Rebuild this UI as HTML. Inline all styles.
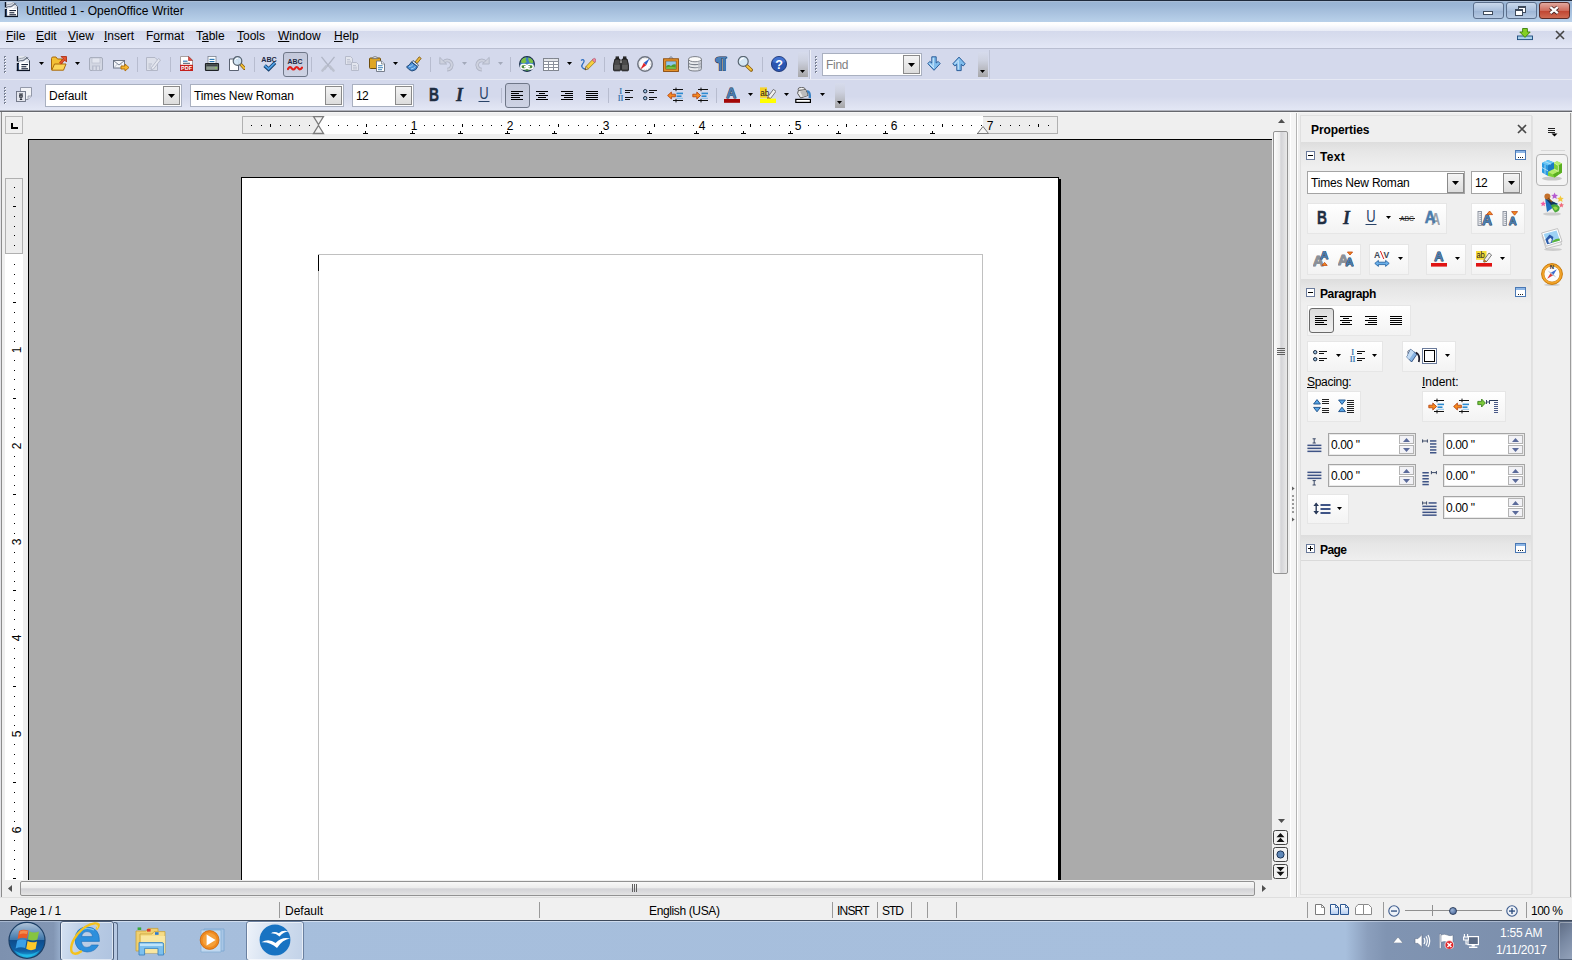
<!DOCTYPE html>
<html><head><meta charset="utf-8"><title>Untitled 1 - OpenOffice Writer</title>
<style>
html,body{margin:0;padding:0}
body{width:1572px;height:960px;overflow:hidden;position:relative;background:#d4d9ec;font:12px "Liberation Sans",sans-serif;color:#000}
div,span.t,svg.i{position:absolute;box-sizing:border-box}
span.t{white-space:nowrap;line-height:14px}
u{text-decoration:underline}
.combo{background:#fff;border:1px solid #a9b0c0;}
.cbtn{background:linear-gradient(#f4f4f4,#dcdcdc);border:1px solid #8a8a8a;}
.grp{background:linear-gradient(#ffffff,#f3f3f3);border:1px solid #e6e6e6}
.spin{background:#fff;border:1px solid #a5a5a5}
</style></head>
<body>
<div style="left:0px;top:0px;width:1572px;height:22px;background:linear-gradient(#98b4d4 0%,#9bb6d6 25%,#a8c1de 55%,#b9d1ea 100%)"></div>
<div style="left:0px;top:0px;width:1572px;height:1px;background:#1e2a3c"></div>
<div style="left:0px;top:1px;width:1572px;height:1px;background:#a9bdd7"></div>
<svg class="i" style="left:4px;top:2px" width="16" height="16" viewBox="0 0 16 16"><path d="M1.5 0.6 H9.6 L13.6 4.6 V14.5 H1.5 Z" fill="#fff"/><path d="M1.5 0.6 H9.6 L13.6 4.6 V7 H1.5 Z" fill="#dfe3ea"/><path d="M2 6.2 C4.4 2.6 6.4 6.2 8.6 3.6 C9.8 2.2 10.8 2.6 12.2 1.4" stroke="#70798a" stroke-width="1.2" fill="none"/><path d="M2 3.4 C4 1.6 6.4 3.4 9 0.8" stroke="#9aa2b0" stroke-width="1" fill="none"/><path d="M4 7.6 C6 6.6 8.4 7 10.4 4.4" stroke="#fff" stroke-width="1.2" fill="none"/><path d="M9.6 0.6 L13.6 4.6" stroke="#6a7280" stroke-width="1"/><rect x="13" y="4.6" width="1" height="10" fill="#3a4250"/><rect x="0.8" y="0" width="1.4" height="5.4" fill="#0c1424"/><rect x="0.8" y="7" width="2.2" height="8" fill="#0c1424"/><rect x="2.2" y="8" width="0.9" height="6" fill="#3a5a86"/><rect x="0.8" y="13.8" width="13.2" height="1.3" fill="#0c1424"/><rect x="5.4" y="8" width="6.6" height="1.1" fill="#1a2438"/><rect x="5.4" y="10.2" width="5" height="1.1" fill="#1a2438"/><rect x="5.4" y="12.2" width="6.6" height="1.1" fill="#1a2438"/></svg>
<span class="t" style="left:26px;top:4px;font-size:12px;letter-spacing:0.03px">Untitled 1 - OpenOffice Writer</span>
<div style="left:1473px;top:2px;width:31px;height:17px;border:1px solid #5b6f8c;border-radius:3px;background:linear-gradient(#c9d8ec,#a9bfdc 50%,#9cb4d4 51%,#b6c9e2)"></div>
<div style="left:1483px;top:11px;width:10px;height:4px;background:#fff;border:1px solid #3f4b5c"></div>
<div style="left:1506px;top:2px;width:31px;height:17px;border:1px solid #5b6f8c;border-radius:3px;background:linear-gradient(#c9d8ec,#a9bfdc 50%,#9cb4d4 51%,#b6c9e2)"></div>
<div style="left:1518px;top:6px;width:8px;height:7px;background:#fff;border:1px solid #3f4b5c;border-top-width:2px"></div>
<div style="left:1515px;top:9px;width:8px;height:7px;background:#fff;border:1px solid #3f4b5c;border-top-width:2px"></div>
<div style="left:1539px;top:2px;width:31px;height:17px;border:1px solid #5a2a26;border-radius:3px;background:linear-gradient(#e2a89e,#cf6c5c 50%,#bf4330 51%,#cf6a52)"></div>
<svg class="i" style="left:1547px;top:4px" width="14" height="12" viewBox="0 0 14 12"><path d="M3.4 3.2 L10.8 9.2 M10.8 3.2 L3.4 9.2" stroke="#4a2424" stroke-width="4"/><path d="M3.4 3.2 L10.8 9.2 M10.8 3.2 L3.4 9.2" stroke="#fff" stroke-width="2.3"/></svg>
<div style="left:0px;top:22px;width:1572px;height:9px;background:linear-gradient(#ffffff 0%,#fdfdfe 30%,#f1f3fa 70%,#e8ebf6 100%)"></div>
<div style="left:0px;top:31px;width:1572px;height:17px;background:linear-gradient(#d4d9ec 0%,#d8ddee 35%,#e3e7f6 100%)"></div>
<div style="left:0px;top:48px;width:1572px;height:1px;background:#b9bed1"></div>
<div style="left:0px;top:49px;width:989px;height:1px;background:#e4e7f3"></div>
<span class="t" style="left:6px;top:29px;"><u>F</u>ile</span>
<span class="t" style="left:36px;top:29px;"><u>E</u>dit</span>
<span class="t" style="left:68px;top:29px;"><u>V</u>iew</span>
<span class="t" style="left:104px;top:29px;"><u>I</u>nsert</span>
<span class="t" style="left:146px;top:29px;">F<u>o</u>rmat</span>
<span class="t" style="left:196px;top:29px;">T<u>a</u>ble</span>
<span class="t" style="left:237px;top:29px;"><u>T</u>ools</span>
<span class="t" style="left:278px;top:29px;"><u>W</u>indow</span>
<span class="t" style="left:334px;top:29px;"><u>H</u>elp</span>
<svg class="i" style="left:1517px;top:28px" width="16" height="16" viewBox="0 0 16 16"><rect x="0.5" y="8" width="15" height="3.6" fill="#a8d0ea" stroke="#1c4a7c" stroke-width="0.9"/><path d="M5.6 0.5 H10.4 V4 H13.2 L8 9.4 L2.8 4 H5.6 Z" fill="#84d024" stroke="#3c800c" stroke-width="0.9" stroke-linejoin="round"/></svg>
<svg class="i" style="left:1555px;top:30px" width="10" height="10" viewBox="0 0 10 10"><path d="M1 1 L9 9 M9 1 L1 9" stroke="#444" stroke-width="1.6"/></svg>
<div style="left:0px;top:49px;width:1572px;height:31px;background:#d4d9ec"></div>
<div style="left:0px;top:79px;width:1572px;height:1px;background:#e6e9f4"></div>
<div style="left:0px;top:80px;width:1572px;height:30px;background:linear-gradient(#d4d9ec 0%,#d4d9ec 55%,#dce0f0 78%,#e3e7f5 100%)"></div>
<div style="left:0px;top:110px;width:1572px;height:1px;background:#b0b2bc"></div>
<div style="left:0px;top:111px;width:1572px;height:1px;background:#66686e"></div>
<div style="left:0px;top:112px;width:1572px;height:1px;background:#f6f6f6"></div>
<div style="left:4px;top:56px;width:2px;height:2px;background:#7a8296"></div>
<div style="left:5px;top:57px;width:1px;height:1px;background:#fff"></div>
<div style="left:4px;top:59px;width:2px;height:2px;background:#7a8296"></div>
<div style="left:5px;top:60px;width:1px;height:1px;background:#fff"></div>
<div style="left:4px;top:62px;width:2px;height:2px;background:#7a8296"></div>
<div style="left:5px;top:63px;width:1px;height:1px;background:#fff"></div>
<div style="left:4px;top:65px;width:2px;height:2px;background:#7a8296"></div>
<div style="left:5px;top:66px;width:1px;height:1px;background:#fff"></div>
<div style="left:4px;top:68px;width:2px;height:2px;background:#7a8296"></div>
<div style="left:5px;top:69px;width:1px;height:1px;background:#fff"></div>
<div style="left:4px;top:71px;width:2px;height:2px;background:#7a8296"></div>
<div style="left:5px;top:72px;width:1px;height:1px;background:#fff"></div>
<div style="left:4px;top:87px;width:2px;height:2px;background:#7a8296"></div>
<div style="left:5px;top:88px;width:1px;height:1px;background:#fff"></div>
<div style="left:4px;top:90px;width:2px;height:2px;background:#7a8296"></div>
<div style="left:5px;top:91px;width:1px;height:1px;background:#fff"></div>
<div style="left:4px;top:93px;width:2px;height:2px;background:#7a8296"></div>
<div style="left:5px;top:94px;width:1px;height:1px;background:#fff"></div>
<div style="left:4px;top:96px;width:2px;height:2px;background:#7a8296"></div>
<div style="left:5px;top:97px;width:1px;height:1px;background:#fff"></div>
<div style="left:4px;top:99px;width:2px;height:2px;background:#7a8296"></div>
<div style="left:5px;top:100px;width:1px;height:1px;background:#fff"></div>
<div style="left:4px;top:102px;width:2px;height:2px;background:#7a8296"></div>
<div style="left:5px;top:103px;width:1px;height:1px;background:#fff"></div>
<div style="left:815px;top:56px;width:2px;height:2px;background:#7a8296"></div>
<div style="left:816px;top:57px;width:1px;height:1px;background:#fff"></div>
<div style="left:815px;top:59px;width:2px;height:2px;background:#7a8296"></div>
<div style="left:816px;top:60px;width:1px;height:1px;background:#fff"></div>
<div style="left:815px;top:62px;width:2px;height:2px;background:#7a8296"></div>
<div style="left:816px;top:63px;width:1px;height:1px;background:#fff"></div>
<div style="left:815px;top:65px;width:2px;height:2px;background:#7a8296"></div>
<div style="left:816px;top:66px;width:1px;height:1px;background:#fff"></div>
<div style="left:815px;top:68px;width:2px;height:2px;background:#7a8296"></div>
<div style="left:816px;top:69px;width:1px;height:1px;background:#fff"></div>
<div style="left:815px;top:71px;width:2px;height:2px;background:#7a8296"></div>
<div style="left:816px;top:72px;width:1px;height:1px;background:#fff"></div>
<div style="left:283px;top:52px;width:25px;height:25px;border:1px solid #6f7788;border-radius:3px;background:linear-gradient(#c3c8da,#ced3e4)"></div>
<svg class="i" style="left:16px;top:56px" width="16" height="16" viewBox="0 0 16 16"><path d="M1.5 0.6 H9.6 L13.6 4.6 V14.5 H1.5 Z" fill="#fff"/><path d="M1.5 0.6 H9.6 L13.6 4.6 V7 H1.5 Z" fill="#dfe3ea"/><path d="M2 6.2 C4.4 2.6 6.4 6.2 8.6 3.6 C9.8 2.2 10.8 2.6 12.2 1.4" stroke="#70798a" stroke-width="1.2" fill="none"/><path d="M2 3.4 C4 1.6 6.4 3.4 9 0.8" stroke="#9aa2b0" stroke-width="1" fill="none"/><path d="M4 7.6 C6 6.6 8.4 7 10.4 4.4" stroke="#fff" stroke-width="1.2" fill="none"/><path d="M9.6 0.6 L13.6 4.6" stroke="#6a7280" stroke-width="1"/><rect x="13" y="4.6" width="1" height="10" fill="#3a4250"/><rect x="0.8" y="0" width="1.4" height="5.4" fill="#0c1424"/><rect x="0.8" y="7" width="2.2" height="8" fill="#0c1424"/><rect x="2.2" y="8" width="0.9" height="6" fill="#3a5a86"/><rect x="0.8" y="13.8" width="13.2" height="1.3" fill="#0c1424"/><rect x="5.4" y="8" width="6.6" height="1.1" fill="#1a2438"/><rect x="5.4" y="10.2" width="5" height="1.1" fill="#1a2438"/><rect x="5.4" y="12.2" width="6.6" height="1.1" fill="#1a2438"/></svg>
<svg class="i" style="left:51px;top:56px" width="16" height="16" viewBox="0 0 16 16"><path d="M0.5 2.5 Q0.5 1 2 1 H5 L6.5 3 H11 V13.5 H0.5 Z" fill="#f3c035" stroke="#a9690b" stroke-width="1"/><path d="M3.5 8 H15 L12.5 14.2 H0.8 Z" fill="#fbd65a" stroke="#a9690b" stroke-width="1"/><path d="M9 7.5 L13.5 3" stroke="#c8330f" stroke-width="2.6"/><path d="M10 0.5 H15.5 V6 Z" fill="#e5502a" stroke="#a82a0c" stroke-width="0.8"/><path d="M9.3 7.2 L13.5 3" stroke="#f47a4a" stroke-width="1"/></svg>
<svg class="i" style="left:88px;top:56px" width="16" height="16" viewBox="0 0 16 16"><rect x="1.5" y="1.5" width="13" height="13" rx="1.5" fill="#d3d7e3" stroke="#a6acbc"/><rect x="4" y="2" width="8" height="5" fill="#e3e6ef" stroke="#b4b9c8" stroke-width="0.6"/><rect x="4" y="9.5" width="8" height="5" fill="#b9bece"/><rect x="5.5" y="10.5" width="2" height="3.5" fill="#d9dce7"/><rect x="9" y="10.5" width="2" height="3.5" fill="#d9dce7"/></svg>
<svg class="i" style="left:113px;top:56px" width="16" height="16" viewBox="0 0 16 16"><rect x="0.5" y="4.5" width="11" height="7.5" fill="#f4f6fa" stroke="#6d7688"/><path d="M0.8 4.8 L6 9 L11.2 4.8" fill="none" stroke="#6d7688" stroke-width="0.9"/><path d="M0.8 11.8 L4.5 8 M11.2 11.8 L7.5 8" stroke="#a0a8b8" stroke-width="0.7"/><path d="M8 10 H12 V8 L16 11.5 L12 15 V13 H8 Z" fill="#f6b52e" stroke="#b06d08" stroke-width="0.9"/></svg>
<svg class="i" style="left:145px;top:56px" width="16" height="16" viewBox="0 0 16 16"><path d="M1.5 1.5 H10 L12.5 4 V14.5 H1.5 Z" fill="#dde0ea" stroke="#b2b7c7"/><path d="M3.5 8 H7 M3.5 10 H6 M3.5 12 H6.5" stroke="#b2b7c7" stroke-width="0.9"/><path d="M6.5 11.5 L13.5 2.5 L15.5 4 L8.5 13 L6 13.8 Z" fill="#e6e8f0" stroke="#b2b7c7" stroke-width="0.9"/></svg>
<svg class="i" style="left:179px;top:56px" width="16" height="16" viewBox="0 0 16 16"><path d="M1.5 0.5 H10 L13.5 4 V14.5 H1.5 Z" fill="#fff" stroke="#a8a0a0"/><path d="M9.5 0.5 L13.5 4.5 H9.5 Z" fill="#e8453c" stroke="#9c2a26" stroke-width="0.6"/><rect x="4" y="4.6" width="4.5" height="1.2" fill="#3b7fb8"/><rect x="4" y="6.8" width="7" height="1" fill="#4a5568"/><rect x="1" y="8.8" width="13" height="6.2" fill="#c4201c"/><text x="7.5" y="13.8" font-family="Liberation Sans,sans-serif" font-size="5.6" font-weight="bold" fill="#fff" text-anchor="middle" textLength="11" lengthAdjust="spacingAndGlyphs">PDF</text></svg>
<svg class="i" style="left:204px;top:56px" width="16" height="16" viewBox="0 0 16 16"><rect x="4" y="0.5" width="8" height="8" fill="#fff" stroke="#7a8290" stroke-width="0.8"/><rect x="5.5" y="2.8" width="5" height="1.2" fill="#2f7ab5"/><rect x="5.5" y="5" width="5" height="1.2" fill="#2f7ab5"/><path d="M1.5 8 Q1.5 7.5 2 7.5 H14 Q14.5 7.5 14.5 8 V13.5 Q14.5 14.5 13.5 14.5 H2.5 Q1.5 14.5 1.5 13.5 Z" fill="#6e7a72" stroke="#1e2226" stroke-width="1.2"/><rect x="2.5" y="8.3" width="11" height="2.2" fill="#3c4246"/><rect x="2.5" y="10.5" width="11" height="3" fill="#8e9a8e"/><rect x="11.3" y="11.2" width="1.4" height="1.2" fill="#8fdc3c"/></svg>
<svg class="i" style="left:229px;top:56px" width="16" height="16" viewBox="0 0 16 16"><path d="M0.5 3 H7.5 L9.5 5 V14.5 H0.5 Z" fill="#fff" stroke="#5a6272"/><path d="M11.5 8 L15.5 12.3" stroke="#8a5a08" stroke-width="3.2" stroke-linecap="round"/><path d="M11.5 8 L15.3 12.1" stroke="#f2c23a" stroke-width="1.8" stroke-linecap="round"/><circle cx="8.5" cy="5" r="4.3" fill="#cfe3f3" fill-opacity="0.92" stroke="#56626f" stroke-width="1.2"/><path d="M6 4 A3 3 0 0 1 9 2.2" stroke="#fff" stroke-width="1" fill="none"/></svg>
<svg class="i" style="left:261px;top:56px" width="16" height="16" viewBox="0 0 16 16"><text x="8" y="5.8" font-family="Liberation Sans,sans-serif" font-size="7.4" font-weight="bold" fill="#1d2a44" text-anchor="middle" textLength="15.6" lengthAdjust="spacingAndGlyphs">ABC</text><path d="M3.6 9.6 L7.6 13.2 L14 6.8" stroke="#14406e" stroke-width="3.6" fill="none" stroke-linejoin="miter"/><path d="M3.8 9.6 L7.6 13 L13.8 6.9" stroke="#4fa0e6" stroke-width="1.8" fill="none"/></svg>
<svg class="i" style="left:287px;top:56px" width="16" height="16" viewBox="0 0 16 16"><text x="8" y="7.6" font-family="Liberation Sans,sans-serif" font-size="7.4" font-weight="bold" fill="#1d2a44" text-anchor="middle" textLength="15" lengthAdjust="spacingAndGlyphs">ABC</text><path d="M1 13 Q2.9 9.6 4.8 12.4 Q6.4 14.6 8 12.4 Q9.6 9.6 11.4 12.4 Q13 14.6 15 11.6" stroke="#e0201a" stroke-width="2.2" fill="none" stroke-linecap="round"/></svg>
<svg class="i" style="left:320px;top:56px" width="16" height="16" viewBox="0 0 16 16"><path d="M1.5 0.8 L11.5 13.5 M14.5 0.8 L4.5 13.5" stroke="#b0b5c5" stroke-width="1.3" fill="none"/><path d="M10 10.5 L13.5 14.5 M6 10.5 L2.5 14.5" stroke="#bcc1cf" stroke-width="2.6" stroke-linecap="round"/></svg>
<svg class="i" style="left:344px;top:56px" width="16" height="16" viewBox="0 0 16 16"><path d="M1.5 0.5 H6.5 L8.5 2.5 V8.5 H1.5 Z" fill="#e2e5ee" stroke="#b6bbcb"/><path d="M3 3.5 H6 M3 5.2 H7 M3 6.9 H7" stroke="#b6bbcb" stroke-width="0.8"/><path d="M7.5 6.5 H12.5 L14.5 8.5 V14.5 H7.5 Z" fill="#e2e5ee" stroke="#b6bbcb"/><path d="M9 9.5 H12 M9 11.2 H13 M9 12.9 H13" stroke="#b6bbcb" stroke-width="0.8"/></svg>
<svg class="i" style="left:369px;top:56px" width="16" height="16" viewBox="0 0 16 16"><rect x="0.5" y="2" width="11" height="10.5" rx="1" fill="#dfa625" stroke="#6e4d0c"/><path d="M3.5 2.6 Q3.5 0.6 6 0.6 Q8.5 0.6 8.5 2.6 Z" fill="#e8e8e8" stroke="#707070" stroke-width="0.8"/><path d="M7.5 5 H12.5 L15.5 8 V15.5 H7.5 Z" fill="#fff" stroke="#6a7280" stroke-width="0.9"/><path d="M12.5 5 V8 H15.5" fill="#e4e8ee" stroke="#6a7280" stroke-width="0.7"/><rect x="9" y="9.2" width="4.5" height="1" fill="#3f84bb"/><rect x="9" y="11.2" width="5" height="1" fill="#3f84bb"/><rect x="9" y="13.2" width="4" height="1" fill="#3f84bb"/></svg>
<svg class="i" style="left:406px;top:56px" width="16" height="16" viewBox="0 0 16 16"><path d="M9 6 L13.2 0.8 L15.2 2.4 L11 7.6 Z" fill="#e9b83e" stroke="#7a5208" stroke-width="0.8"/><path d="M7 4.5 L12.5 9 L11.3 10.5 L5.8 6 Z" fill="#eef2f7" stroke="#1d3e66" stroke-width="0.8"/><path d="M5.5 6 L11.5 10.8 Q10.5 14.5 6 15 Q2.5 14 0.5 10.8 Q3.5 9.5 5.5 6 Z" fill="#4a90d8" stroke="#153c6c" stroke-width="0.9"/><path d="M3 10.5 Q5.5 10.5 7 8.5 M5 13 Q8 12.5 9.5 10.3" stroke="#a4d0f6" stroke-width="1" fill="none"/></svg>
<svg class="i" style="left:439px;top:56px" width="16" height="16" viewBox="0 0 16 16"><g><path d="M4.6 6.2 A4.6 4.6 0 1 1 8.2 13.6" fill="none" stroke="#aeb3c4" stroke-width="3.6"/><path d="M4.6 6.2 A4.6 4.6 0 1 1 8.2 13.6" fill="none" stroke="#cdd1de" stroke-width="2"/><path d="M0.8 1.4 V8 H7.6 Z" fill="#cdd1de" stroke="#aeb3c4" stroke-width="0.9"/></g></svg>
<svg class="i" style="left:474px;top:56px" width="16" height="16" viewBox="0 0 16 16"><g transform="translate(16,0) scale(-1,1)"><path d="M4.6 6.2 A4.6 4.6 0 1 1 8.2 13.6" fill="none" stroke="#aeb3c4" stroke-width="3.6"/><path d="M4.6 6.2 A4.6 4.6 0 1 1 8.2 13.6" fill="none" stroke="#cdd1de" stroke-width="2"/><path d="M0.8 1.4 V8 H7.6 Z" fill="#cdd1de" stroke="#aeb3c4" stroke-width="0.9"/></g></svg>
<svg class="i" style="left:519px;top:56px" width="16" height="16" viewBox="0 0 16 16"><circle cx="8" cy="8" r="7.4" fill="#3f7fc6" stroke="#1d3048" stroke-width="1.1"/><path d="M3 3.2 Q5 1.2 7.4 1.5 L6.6 4 L7.8 6 L5 7.4 L2 6.5 Q2 4.5 3 3.2 Z M9.2 1.4 Q12.8 2 14.2 5.4 L13.5 7.4 L10.5 6.6 L9.4 4 Z" fill="#7bc043"/><path d="M1.2 9.5 Q8 7 14.8 9.5 Q14 13.5 8 14.9 Q2 13.5 1.2 9.5 Z" fill="#4d8a3a"/><rect x="1.8" y="8.6" width="6" height="4.4" rx="2.2" fill="none" stroke="#fff" stroke-width="1.5"/><rect x="8.2" y="8.6" width="6" height="4.4" rx="2.2" fill="none" stroke="#fff" stroke-width="1.5"/><rect x="5" y="10" width="6" height="1.6" fill="#fff"/></svg>
<svg class="i" style="left:543px;top:56px" width="16" height="16" viewBox="0 0 16 16"><rect x="0.5" y="2.5" width="15" height="12" fill="#fff" stroke="#80858f"/><path d="M0.5 5.5 H15.5 M0.5 8.5 H15.5 M0.5 11.5 H15.5 M5.5 2.5 V14.5 M10.5 2.5 V14.5" stroke="#8c919c" stroke-width="1"/><rect x="1" y="3" width="14" height="2" fill="#e4e6ea"/></svg>
<svg class="i" style="left:580px;top:56px" width="16" height="16" viewBox="0 0 16 16"><path d="M1 4.5 Q3 2.8 4 4.5 Q4.6 6.2 2.6 8 Q1 9.8 2.4 11.6 Q3.4 12.8 5.5 13.2" stroke="#2f6fc0" stroke-width="1.3" fill="none"/><path d="M5 13.8 L6 10.5 L12.8 3.4 L15.4 5.8 L8.4 12.8 Z" fill="#f6cf3c" stroke="#8a6a10" stroke-width="0.7"/><path d="M12.2 4 L13.6 2.6 Q14.6 2 15.6 3 Q16.4 4 15.6 5 L14.6 6.4 Z" fill="#ef8aa0" stroke="#a84860" stroke-width="0.6"/><path d="M5 13.8 L6 10.5 L8.4 12.8 Z" fill="#f0d9b0" stroke="#7a5a10" stroke-width="0.5"/><path d="M5 13.8 L5.5 12.3 L6.4 13.2 Z" fill="#222"/></svg>
<svg class="i" style="left:613px;top:56px" width="16" height="16" viewBox="0 0 16 16"><rect x="2.6" y="0.4" width="3.4" height="3" fill="#2a2a2a"/><rect x="10" y="0.4" width="3.4" height="3" fill="#2a2a2a"/><path d="M2 3 H6.6 L7.4 7 V14 Q7.4 14.8 6.6 14.8 H1.4 Q0.6 14.8 0.6 14 V8.5 Z" fill="#4a4a4a" stroke="#111" stroke-width="0.9"/><path d="M14 3 H9.4 L8.6 7 V14 Q8.6 14.8 9.4 14.8 H14.6 Q15.4 14.8 15.4 14 V8.5 Z" fill="#4a4a4a" stroke="#111" stroke-width="0.9"/><rect x="6.4" y="4" width="3.2" height="3.4" fill="#8a8a8a" stroke="#222" stroke-width="0.6"/><path d="M1.2 10 H7 M1.2 12 H7 M9 10 H14.8 M9 12 H14.8" stroke="#7c7c7c" stroke-width="0.8"/></svg>
<svg class="i" style="left:637px;top:56px" width="16" height="16" viewBox="0 0 16 16"><circle cx="8" cy="8" r="7.2" fill="#fdfdfd" stroke="#6e7480" stroke-width="1.5"/><circle cx="8" cy="8" r="5.6" fill="none" stroke="#c4c8d0" stroke-width="0.8" stroke-dasharray="1 1.2"/><path d="M12.6 2.6 L9.2 9.2 L6.8 6.8 Z" fill="#2e62c8"/><path d="M3.4 13.4 L6.8 6.8 L9.2 9.2 Z" fill="#e0262a"/></svg>
<svg class="i" style="left:663px;top:56px" width="16" height="16" viewBox="0 0 16 16"><path d="M5.5 3 L8 0.6 L10.5 3" fill="none" stroke="#6a7078" stroke-width="0.9"/><rect x="0.6" y="2.8" width="14.8" height="12.6" fill="#ee9a2e" stroke="#8a4a0a" stroke-width="1"/><rect x="2.8" y="5" width="10.4" height="8.2" fill="#8ec6ee" stroke="#8a4a0a" stroke-width="0.7"/><path d="M3.2 12.8 V10 Q5.5 8 8 10 Q10 7.4 12.8 8.6 V12.8 Z" fill="#4d9a2e"/><path d="M3.2 12.8 V11.4 Q7 10 12.8 11.4 V12.8 Z" fill="#7bc043"/></svg>
<svg class="i" style="left:687px;top:56px" width="16" height="16" viewBox="0 0 16 16"><path d="M1.5 3.2 V12.6 Q1.5 15 8 15 Q14.5 15 14.5 12.6 V3.2 Z" fill="#e9ebee" stroke="#6e737c" stroke-width="0.9"/><path d="M1.5 6.4 Q1.5 8.6 8 8.6 Q14.5 8.6 14.5 6.4 M1.5 9.6 Q1.5 11.8 8 11.8 Q14.5 11.8 14.5 9.6" fill="none" stroke="#7c828c" stroke-width="1.1"/><ellipse cx="8" cy="3.2" rx="6.5" ry="2.6" fill="#fafafa" stroke="#6e737c" stroke-width="0.9"/><path d="M11 5.5 V14.4 Q14 13.8 14.2 12.6 V4.2 Q13.5 5 11 5.5 Z" fill="#b8bcc4" fill-opacity="0.7"/></svg>
<svg class="i" style="left:713px;top:56px" width="16" height="16" viewBox="0 0 16 16"><text x="8" y="13.4" font-family="Liberation Sans,sans-serif" font-weight="bold" font-size="16.5" fill="#4a80b8" stroke="#16304e" stroke-width="0.9" paint-order="stroke" stroke-linejoin="round" text-anchor="middle" textLength="12.4" lengthAdjust="spacingAndGlyphs">¶</text></svg>
<svg class="i" style="left:737px;top:56px" width="16" height="16" viewBox="0 0 16 16"><path d="M9.5 9.5 L14.2 14" stroke="#8a5a08" stroke-width="3.4" stroke-linecap="round"/><path d="M10 10 L14 13.8" stroke="#f4c63e" stroke-width="1.9" stroke-linecap="round"/><circle cx="6.2" cy="5.4" r="5" fill="#d4e6f4" stroke="#5a6672" stroke-width="1.2"/><path d="M3.2 4.6 A3.2 3.2 0 0 1 6.6 2.4" stroke="#fff" stroke-width="1.1" fill="none"/></svg>
<svg class="i" style="left:771px;top:56px" width="16" height="16" viewBox="0 0 16 16"><circle cx="8" cy="8" r="7.6" fill="#2a55b0" stroke="#142c6a" stroke-width="0.8"/><path d="M1.6 6 A6.6 6.6 0 0 1 14.4 6 Q8 8.4 1.6 6 Z" fill="#4a7ad8" fill-opacity="0.75"/><text x="8" y="12.6" font-family="Liberation Sans,sans-serif" font-size="12.5" font-weight="bold" fill="#fff" text-anchor="middle">?</text></svg>
<svg class="i" style="left:39px;top:62px" width="5" height="3" viewBox="0 0 5 3"><polygon points="0,0 5,0 2.5,3" fill="#000"/></svg>
<svg class="i" style="left:75px;top:62px" width="5" height="3" viewBox="0 0 5 3"><polygon points="0,0 5,0 2.5,3" fill="#000"/></svg>
<svg class="i" style="left:393px;top:62px" width="5" height="3" viewBox="0 0 5 3"><polygon points="0,0 5,0 2.5,3" fill="#000"/></svg>
<svg class="i" style="left:462px;top:62px" width="5" height="3" viewBox="0 0 5 3"><polygon points="0,0 5,0 2.5,3" fill="#a3a9ba"/></svg>
<svg class="i" style="left:498px;top:62px" width="5" height="3" viewBox="0 0 5 3"><polygon points="0,0 5,0 2.5,3" fill="#a3a9ba"/></svg>
<svg class="i" style="left:567px;top:62px" width="5" height="3" viewBox="0 0 5 3"><polygon points="0,0 5,0 2.5,3" fill="#000"/></svg>
<div style="left:137px;top:57px;width:1px;height:15px;background:#b7bccf"></div>
<div style="left:170px;top:57px;width:1px;height:15px;background:#b7bccf"></div>
<div style="left:254px;top:57px;width:1px;height:15px;background:#b7bccf"></div>
<div style="left:311px;top:57px;width:1px;height:15px;background:#b7bccf"></div>
<div style="left:430px;top:57px;width:1px;height:15px;background:#b7bccf"></div>
<div style="left:510px;top:57px;width:1px;height:15px;background:#b7bccf"></div>
<div style="left:604px;top:57px;width:1px;height:15px;background:#b7bccf"></div>
<div style="left:762px;top:57px;width:1px;height:15px;background:#b7bccf"></div>
<div style="left:798px;top:52px;width:10px;height:25px;background:linear-gradient(#d6dbec 0%,#cdd1df 35%,#a6a6a8 100%)"></div>
<svg class="i" style="left:800px;top:70px" width="5" height="3" viewBox="0 0 5 3"><polygon points="0,0 5,0 2.5,3" fill="#000"/></svg>
<div style="left:809px;top:50px;width:1px;height:29px;background:#bfc4d6"></div>
<div style="left:810px;top:50px;width:1px;height:29px;background:#eef0f8"></div>
<div class="combo" style="left:822px;top:53px;width:100px;height:23px;"></div>
<span class="t" style="left:826px;top:58px;color:#808080;letter-spacing:-0.3px">Find</span>
<div class="cbtn" style="left:903px;top:55px;width:17px;height:19px;"></div>
<svg class="i" style="left:908px;top:63px" width="7" height="4" viewBox="0 0 7 4"><polygon points="0,0 7,0 3.5,4" fill="#000"/></svg>
<svg class="i" style="left:926px;top:56px" width="16" height="16" viewBox="0 0 16 16"><path d="M5.8 0.8 H10.2 V7 L12.2 5.4 L14.2 7.6 L8 14.3 L1.8 7.6 L3.8 5.4 L5.8 7 Z" fill="#7fbcec" stroke="#1f5492" stroke-width="0.9" stroke-linejoin="round"/><path d="M7.2 1.8 V10.6 M3.6 7.4 L8 12" stroke="#d4ecfc" stroke-width="1" fill="none"/></svg>
<svg class="i" style="left:951px;top:56px" width="16" height="16" viewBox="0 0 16 16"><path d="M5.8 14.6 H10.2 V8.4 L12.2 10 L14.2 7.8 L8 1.1 L1.8 7.8 L3.8 10 L5.8 8.4 Z" fill="#7fbcec" stroke="#1f5492" stroke-width="0.9" stroke-linejoin="round"/><path d="M7.2 13.6 V4.8 M3.6 8 L8 3.4" stroke="#d4ecfc" stroke-width="1" fill="none"/></svg>
<div style="left:978px;top:52px;width:10px;height:25px;background:linear-gradient(#d6dbec 0%,#cdd1df 35%,#a6a6a8 100%)"></div>
<svg class="i" style="left:980px;top:70px" width="5" height="3" viewBox="0 0 5 3"><polygon points="0,0 5,0 2.5,3" fill="#000"/></svg>
<div style="left:989px;top:50px;width:1px;height:29px;background:#bfc4d6"></div>
<svg class="i" style="left:16px;top:87px" width="16" height="16" viewBox="0 0 16 16"><path d="M4.5 0.5 H15.5 V9 L12 12.5 H4.5 Z" fill="#f2f3f7" stroke="#8a90a0" stroke-width="0.9"/><path d="M15.5 9 H12 V12.5" fill="#dcdfe8" stroke="#8a90a0" stroke-width="0.7"/><rect x="0.5" y="4.5" width="9" height="10" fill="#e4e6ee" stroke="#6a7080" stroke-width="0.9"/><path d="M3 7 H7 M5 7 V12.5 M3.8 12.5 H6.2" stroke="#2a2f3a" stroke-width="1.1" fill="none"/><rect x="3.4" y="8.2" width="3.2" height="2" fill="none" stroke="#2a2f3a" stroke-width="0.7"/></svg>
<div class="combo" style="left:45px;top:84px;width:137px;height:23px;"></div>
<span class="t" style="left:49px;top:89px;">Default</span>
<div class="cbtn" style="left:163px;top:86px;width:17px;height:19px;"></div>
<svg class="i" style="left:168px;top:94px" width="7" height="4" viewBox="0 0 7 4"><polygon points="0,0 7,0 3.5,4" fill="#000"/></svg>
<div class="combo" style="left:190px;top:84px;width:154px;height:23px;"></div>
<span class="t" style="left:194px;top:89px;letter-spacing:-0.12px">Times New Roman</span>
<div class="cbtn" style="left:325px;top:86px;width:17px;height:19px;"></div>
<svg class="i" style="left:330px;top:94px" width="7" height="4" viewBox="0 0 7 4"><polygon points="0,0 7,0 3.5,4" fill="#000"/></svg>
<div class="combo" style="left:352px;top:84px;width:62px;height:23px;"></div>
<span class="t" style="left:356px;top:89px;letter-spacing:-0.6px">12</span>
<div class="cbtn" style="left:395px;top:86px;width:17px;height:19px;"></div>
<svg class="i" style="left:400px;top:94px" width="7" height="4" viewBox="0 0 7 4"><polygon points="0,0 7,0 3.5,4" fill="#000"/></svg>
<div style="left:505px;top:83px;width:25px;height:25px;border:1px solid #6f7788;border-radius:3px;background:linear-gradient(#c3c8da,#ced3e4)"></div>
<svg class="i" style="left:426px;top:87px" width="16" height="16" viewBox="0 0 16 16"><text x="8" y="13.6" font-family="Liberation Sans,sans-serif" font-size="17.5" font-weight="bold" fill="#1f2e42" text-anchor="middle" textLength="10" lengthAdjust="spacingAndGlyphs" stroke="#1f2e42" stroke-width="0.4">B</text></svg>
<svg class="i" style="left:451px;top:87px" width="16" height="16" viewBox="0 0 16 16"><text x="8.4" y="13.7" font-family="Liberation Serif,serif" font-style="italic" font-weight="bold" font-size="18" fill="#1f2e42" text-anchor="middle" stroke="#1f2e42" stroke-width="0.3">I</text></svg>
<svg class="i" style="left:476px;top:87px" width="16" height="16" viewBox="0 0 16 16"><text x="8" y="12.3" font-family="Liberation Sans,sans-serif" font-size="15.6" fill="#2a4468" text-anchor="middle" textLength="9.4" lengthAdjust="spacingAndGlyphs">U</text><rect x="2.5" y="14" width="11" height="1" fill="#2a4468"/></svg>
<svg class="i" style="left:509px;top:87px" width="16" height="16" viewBox="0 0 16 16"><rect x="2" y="4" width="12" height="1" fill="#000"/><rect x="2" y="6" width="8" height="1" fill="#000"/><rect x="2" y="8" width="12" height="1" fill="#000"/><rect x="2" y="10" width="9" height="1" fill="#000"/><rect x="2" y="12" width="12" height="1" fill="#000"/></svg>
<svg class="i" style="left:534px;top:87px" width="16" height="16" viewBox="0 0 16 16"><rect x="2.0" y="4" width="12" height="1" fill="#000"/><rect x="5.0" y="6" width="6" height="1" fill="#000"/><rect x="2.0" y="8" width="12" height="1" fill="#000"/><rect x="4.0" y="10" width="8" height="1" fill="#000"/><rect x="2.0" y="12" width="12" height="1" fill="#000"/></svg>
<svg class="i" style="left:559px;top:87px" width="16" height="16" viewBox="0 0 16 16"><rect x="2" y="4" width="12" height="1" fill="#000"/><rect x="6" y="6" width="8" height="1" fill="#000"/><rect x="2" y="8" width="12" height="1" fill="#000"/><rect x="5" y="10" width="9" height="1" fill="#000"/><rect x="2" y="12" width="12" height="1" fill="#000"/></svg>
<svg class="i" style="left:584px;top:87px" width="16" height="16" viewBox="0 0 16 16"><rect x="2" y="4" width="12" height="1" fill="#000"/><rect x="2" y="6" width="12" height="1" fill="#000"/><rect x="2" y="8" width="12" height="1" fill="#000"/><rect x="2" y="10" width="12" height="1" fill="#000"/><rect x="2" y="12" width="12" height="1" fill="#000"/></svg>
<svg class="i" style="left:617px;top:87px" width="16" height="16" viewBox="0 0 16 16"><text x="3.6" y="6.6" font-family="Liberation Serif,serif" font-size="7.4" font-weight="bold" fill="#3f7ab0" text-anchor="middle">I</text><text x="3.6" y="13.6" font-family="Liberation Serif,serif" font-size="7.4" font-weight="bold" fill="#3f7ab0" text-anchor="middle">II</text><rect x="8" y="3" width="8" height="1" fill="#111"/><rect x="8" y="5" width="5" height="1" fill="#111"/><rect x="8" y="10" width="8" height="1" fill="#111"/><rect x="8" y="12" width="5" height="1" fill="#111"/></svg>
<svg class="i" style="left:642px;top:87px" width="16" height="16" viewBox="0 0 16 16"><circle cx="3.2" cy="4.2" r="1.7" fill="#9fc4e4" stroke="#16263c" stroke-width="1"/><circle cx="3.2" cy="11.2" r="1.7" fill="#9fc4e4" stroke="#16263c" stroke-width="1"/><rect x="7" y="3" width="8" height="1" fill="#111"/><rect x="7" y="5" width="5" height="1" fill="#111"/><rect x="7" y="10" width="8" height="1" fill="#111"/><rect x="7" y="12" width="5" height="1" fill="#111"/></svg>
<svg class="i" style="left:667px;top:87px" width="16" height="16" viewBox="0 0 16 16"><rect x="6" y="2" width="10" height="1" fill="#111"/><rect x="8.5" y="0.6" width="1" height="3.6" fill="#111"/><rect x="6" y="13" width="10" height="1" fill="#111"/><rect x="8.5" y="11.8" width="1" height="3.6" fill="#111"/><rect x="9.5" y="5.6" width="6.5" height="1.6" fill="#2c8ad0"/><rect x="9.5" y="8.4" width="5" height="1.6" fill="#2c8ad0"/><rect x="9.5" y="10.8" width="6.5" height="0.9" fill="#7ab8e6"/><path d="M0.6 8.5 L4.4 5 V7.2 H8.4 V9.8 H4.4 V12 Z" fill="#f58a1e" stroke="#b23c0a" stroke-width="0.8"/></svg>
<svg class="i" style="left:692px;top:87px" width="16" height="16" viewBox="0 0 16 16"><rect x="6" y="2" width="10" height="1" fill="#111"/><rect x="8.5" y="0.6" width="1" height="3.6" fill="#111"/><rect x="6" y="13" width="10" height="1" fill="#111"/><rect x="8.5" y="11.8" width="1" height="3.6" fill="#111"/><rect x="9.5" y="5.6" width="6.5" height="1.6" fill="#2c8ad0"/><rect x="9.5" y="8.4" width="5" height="1.6" fill="#2c8ad0"/><rect x="9.5" y="10.8" width="6.5" height="0.9" fill="#7ab8e6"/><path d="M8.6 8.5 L4.8 5 V7.2 H0.8 V9.8 H4.8 V12 Z" fill="#f58a1e" stroke="#b23c0a" stroke-width="0.8"/></svg>
<svg class="i" style="left:724px;top:87px" width="16" height="16" viewBox="0 0 16 16"><text x="7.35" y="10.60" font-family="Liberation Sans,sans-serif" font-weight="bold" font-size="13.97" fill="#4a7cae" stroke="#16324e" stroke-width="0.8" paint-order="stroke" stroke-linejoin="round" text-anchor="middle">A</text><rect x="0" y="12" width="16" height="3.8" fill="#a30808"/></svg>
<svg class="i" style="left:760px;top:87px" width="16" height="16" viewBox="0 0 16 16"><rect x="0" y="0.4" width="7" height="10.4" fill="#f6d326"/><text x="0.2" y="8.6" font-family="Liberation Sans,sans-serif" font-size="9.5" fill="#1a1a1a" textLength="9" lengthAdjust="spacingAndGlyphs">ab</text><path d="M8 9.6 L13.4 2.4 L16 4.4 L10.6 11.4 L7.6 12 Z" fill="#f0f0f0" stroke="#5a5a5a" stroke-width="0.8"/><path d="M7.6 12 L8 9.8 L10.4 11.4 Z" fill="#e89a28" stroke="#7a4a08" stroke-width="0.5"/><rect x="0" y="11.6" width="16" height="4.4" fill="#ffff00"/></svg>
<svg class="i" style="left:795px;top:87px" width="16" height="16" viewBox="0 0 16 16"><path d="M12 4.5 Q15.2 4 14.8 11" fill="none" stroke="#3a82c4" stroke-width="2.4"/><ellipse cx="6.6" cy="2.2" rx="3.6" ry="1.8" fill="#f4f4f4" stroke="#5a5a5a" stroke-width="0.9"/><path d="M3.4 3.4 L10.8 2.6 L13 8.4 L5.6 11 L2.6 6.4 Z" fill="#e8e8e8" stroke="#4a4a4a" stroke-width="0.9"/><path d="M5 4.4 L8 10 L12.6 8.2 L10.6 3.2 Z" fill="#bcbcbc"/><rect x="0.8" y="12.4" width="14.6" height="3" fill="#fff" stroke="#000" stroke-width="1.2"/></svg>
<svg class="i" style="left:748px;top:93px" width="5" height="3" viewBox="0 0 5 3"><polygon points="0,0 5,0 2.5,3" fill="#000"/></svg>
<svg class="i" style="left:784px;top:93px" width="5" height="3" viewBox="0 0 5 3"><polygon points="0,0 5,0 2.5,3" fill="#000"/></svg>
<svg class="i" style="left:820px;top:93px" width="5" height="3" viewBox="0 0 5 3"><polygon points="0,0 5,0 2.5,3" fill="#000"/></svg>
<div style="left:501px;top:88px;width:1px;height:15px;background:#b7bccf"></div>
<div style="left:608px;top:88px;width:1px;height:15px;background:#b7bccf"></div>
<div style="left:716px;top:88px;width:1px;height:15px;background:#b7bccf"></div>
<div style="left:835px;top:83px;width:10px;height:25px;background:linear-gradient(#d6dbec 0%,#cdd1df 35%,#a6a6a8 100%)"></div>
<svg class="i" style="left:837px;top:101px" width="5" height="3" viewBox="0 0 5 3"><polygon points="0,0 5,0 2.5,3" fill="#000"/></svg>
<div style="left:0px;top:113px;width:1300px;height:785px;background:#efefef"></div>
<div style="left:5px;top:116px;width:18px;height:18px;border:1px solid #b8b8b8;background:#efefef"></div>
<div style="left:11px;top:123px;width:2px;height:6px;background:#000"></div>
<div style="left:11px;top:127px;width:7px;height:2px;background:#000"></div>
<div style="left:242px;top:116px;width:76px;height:18px;border:1px solid #b0b0b0;border-right:0;background:#ededed"></div>
<div style="left:318px;top:116px;width:665px;height:18px;background:#fff"></div>
<div style="left:983px;top:116px;width:75px;height:18px;border:1px solid #b0b0b0;border-left:0;background:#ededed"></div>
<svg class="i" style="left:0;top:116px;font:12px 'Liberation Sans',sans-serif" width="1272" height="20" viewBox="0 0 1272 20"><rect x="251" y="9" width="1" height="1" fill="#000"/><rect x="261" y="9" width="1" height="1" fill="#000"/><rect x="270" y="8" width="1" height="3" fill="#000"/><rect x="280" y="9" width="1" height="1" fill="#000"/><rect x="290" y="9" width="1" height="1" fill="#000"/><rect x="299" y="9" width="1" height="1" fill="#000"/><rect x="309" y="9" width="1" height="1" fill="#000"/><rect x="328" y="9" width="1" height="1" fill="#000"/><rect x="338" y="9" width="1" height="1" fill="#000"/><rect x="347" y="9" width="1" height="1" fill="#000"/><rect x="357" y="9" width="1" height="1" fill="#000"/><rect x="366" y="8" width="1" height="3" fill="#000"/><rect x="376" y="9" width="1" height="1" fill="#000"/><rect x="386" y="9" width="1" height="1" fill="#000"/><rect x="395" y="9" width="1" height="1" fill="#000"/><rect x="405" y="9" width="1" height="1" fill="#000"/><text x="414" y="14" text-anchor="middle">1</text><rect x="424" y="9" width="1" height="1" fill="#000"/><rect x="434" y="9" width="1" height="1" fill="#000"/><rect x="443" y="9" width="1" height="1" fill="#000"/><rect x="453" y="9" width="1" height="1" fill="#000"/><rect x="462" y="8" width="1" height="3" fill="#000"/><rect x="472" y="9" width="1" height="1" fill="#000"/><rect x="482" y="9" width="1" height="1" fill="#000"/><rect x="491" y="9" width="1" height="1" fill="#000"/><rect x="501" y="9" width="1" height="1" fill="#000"/><text x="510" y="14" text-anchor="middle">2</text><rect x="520" y="9" width="1" height="1" fill="#000"/><rect x="530" y="9" width="1" height="1" fill="#000"/><rect x="539" y="9" width="1" height="1" fill="#000"/><rect x="549" y="9" width="1" height="1" fill="#000"/><rect x="558" y="8" width="1" height="3" fill="#000"/><rect x="568" y="9" width="1" height="1" fill="#000"/><rect x="578" y="9" width="1" height="1" fill="#000"/><rect x="587" y="9" width="1" height="1" fill="#000"/><rect x="597" y="9" width="1" height="1" fill="#000"/><text x="606" y="14" text-anchor="middle">3</text><rect x="616" y="9" width="1" height="1" fill="#000"/><rect x="626" y="9" width="1" height="1" fill="#000"/><rect x="635" y="9" width="1" height="1" fill="#000"/><rect x="645" y="9" width="1" height="1" fill="#000"/><rect x="654" y="8" width="1" height="3" fill="#000"/><rect x="664" y="9" width="1" height="1" fill="#000"/><rect x="674" y="9" width="1" height="1" fill="#000"/><rect x="683" y="9" width="1" height="1" fill="#000"/><rect x="693" y="9" width="1" height="1" fill="#000"/><text x="702" y="14" text-anchor="middle">4</text><rect x="712" y="9" width="1" height="1" fill="#000"/><rect x="722" y="9" width="1" height="1" fill="#000"/><rect x="731" y="9" width="1" height="1" fill="#000"/><rect x="741" y="9" width="1" height="1" fill="#000"/><rect x="750" y="8" width="1" height="3" fill="#000"/><rect x="760" y="9" width="1" height="1" fill="#000"/><rect x="770" y="9" width="1" height="1" fill="#000"/><rect x="779" y="9" width="1" height="1" fill="#000"/><rect x="789" y="9" width="1" height="1" fill="#000"/><text x="798" y="14" text-anchor="middle">5</text><rect x="808" y="9" width="1" height="1" fill="#000"/><rect x="818" y="9" width="1" height="1" fill="#000"/><rect x="827" y="9" width="1" height="1" fill="#000"/><rect x="837" y="9" width="1" height="1" fill="#000"/><rect x="846" y="8" width="1" height="3" fill="#000"/><rect x="856" y="9" width="1" height="1" fill="#000"/><rect x="866" y="9" width="1" height="1" fill="#000"/><rect x="875" y="9" width="1" height="1" fill="#000"/><rect x="885" y="9" width="1" height="1" fill="#000"/><text x="894" y="14" text-anchor="middle">6</text><rect x="904" y="9" width="1" height="1" fill="#000"/><rect x="914" y="9" width="1" height="1" fill="#000"/><rect x="923" y="9" width="1" height="1" fill="#000"/><rect x="933" y="9" width="1" height="1" fill="#000"/><rect x="942" y="8" width="1" height="3" fill="#000"/><rect x="952" y="9" width="1" height="1" fill="#000"/><rect x="962" y="9" width="1" height="1" fill="#000"/><rect x="971" y="9" width="1" height="1" fill="#000"/><rect x="981" y="9" width="1" height="1" fill="#000"/><text x="990" y="14" text-anchor="middle">7</text><rect x="1000" y="9" width="1" height="1" fill="#000"/><rect x="1010" y="9" width="1" height="1" fill="#000"/><rect x="1019" y="9" width="1" height="1" fill="#000"/><rect x="1029" y="9" width="1" height="1" fill="#000"/><rect x="1038" y="8" width="1" height="3" fill="#000"/><rect x="1048" y="9" width="1" height="1" fill="#000"/><rect x="363" y="17" width="5" height="1" fill="#000"/><rect x="365" y="15" width="1" height="3" fill="#000"/><rect x="410" y="17" width="5" height="1" fill="#000"/><rect x="412" y="15" width="1" height="3" fill="#000"/><rect x="458" y="17" width="5" height="1" fill="#000"/><rect x="460" y="15" width="1" height="3" fill="#000"/><rect x="505" y="17" width="5" height="1" fill="#000"/><rect x="507" y="15" width="1" height="3" fill="#000"/><rect x="552" y="17" width="5" height="1" fill="#000"/><rect x="554" y="15" width="1" height="3" fill="#000"/><rect x="599" y="17" width="5" height="1" fill="#000"/><rect x="601" y="15" width="1" height="3" fill="#000"/><rect x="647" y="17" width="5" height="1" fill="#000"/><rect x="649" y="15" width="1" height="3" fill="#000"/><rect x="694" y="17" width="5" height="1" fill="#000"/><rect x="696" y="15" width="1" height="3" fill="#000"/><rect x="741" y="17" width="5" height="1" fill="#000"/><rect x="743" y="15" width="1" height="3" fill="#000"/><rect x="788" y="17" width="5" height="1" fill="#000"/><rect x="790" y="15" width="1" height="3" fill="#000"/><rect x="836" y="17" width="5" height="1" fill="#000"/><rect x="838" y="15" width="1" height="3" fill="#000"/><rect x="883" y="17" width="5" height="1" fill="#000"/><rect x="885" y="15" width="1" height="3" fill="#000"/><rect x="930" y="17" width="5" height="1" fill="#000"/><rect x="932" y="15" width="1" height="3" fill="#000"/><rect x="977" y="17" width="5" height="1" fill="#000"/><rect x="979" y="15" width="1" height="3" fill="#000"/><path d="M313.5 0.5 H323.5 L318.5 8.5 Z M313.5 17.5 H323.5 L318.5 9.5 Z" fill="#f4f4f4" stroke="#7a7a7a" stroke-width="1.3"/><path d="M977.5 17.5 H988.5 L983 10.5 Z" fill="#f4f4f4" stroke="#7a7a7a"/></svg>
<div style="left:5px;top:178px;width:18px;height:76px;border:1px solid #b0b0b0;background:#ededed"></div>
<div style="left:5px;top:254px;width:18px;height:626px;background:#fff"></div>
<svg class="i" style="left:0;top:0;font:12px 'Liberation Sans',sans-serif" width="28" height="880" viewBox="0 0 28 880"><rect x="14" y="187" width="1" height="1" fill="#000"/><rect x="14" y="197" width="1" height="1" fill="#000"/><rect x="13" y="206" width="3" height="1" fill="#000"/><rect x="14" y="216" width="1" height="1" fill="#000"/><rect x="14" y="226" width="1" height="1" fill="#000"/><rect x="14" y="235" width="1" height="1" fill="#000"/><rect x="14" y="245" width="1" height="1" fill="#000"/><rect x="14" y="264" width="1" height="1" fill="#000"/><rect x="14" y="274" width="1" height="1" fill="#000"/><rect x="14" y="283" width="1" height="1" fill="#000"/><rect x="14" y="293" width="1" height="1" fill="#000"/><rect x="13" y="302" width="3" height="1" fill="#000"/><rect x="14" y="312" width="1" height="1" fill="#000"/><rect x="14" y="322" width="1" height="1" fill="#000"/><rect x="14" y="331" width="1" height="1" fill="#000"/><rect x="14" y="341" width="1" height="1" fill="#000"/><text transform="translate(21,350) rotate(-90)" text-anchor="middle" x="0" y="0">1</text><rect x="14" y="360" width="1" height="1" fill="#000"/><rect x="14" y="370" width="1" height="1" fill="#000"/><rect x="14" y="379" width="1" height="1" fill="#000"/><rect x="14" y="389" width="1" height="1" fill="#000"/><rect x="13" y="398" width="3" height="1" fill="#000"/><rect x="14" y="408" width="1" height="1" fill="#000"/><rect x="14" y="418" width="1" height="1" fill="#000"/><rect x="14" y="427" width="1" height="1" fill="#000"/><rect x="14" y="437" width="1" height="1" fill="#000"/><text transform="translate(21,446) rotate(-90)" text-anchor="middle" x="0" y="0">2</text><rect x="14" y="456" width="1" height="1" fill="#000"/><rect x="14" y="466" width="1" height="1" fill="#000"/><rect x="14" y="475" width="1" height="1" fill="#000"/><rect x="14" y="485" width="1" height="1" fill="#000"/><rect x="13" y="494" width="3" height="1" fill="#000"/><rect x="14" y="504" width="1" height="1" fill="#000"/><rect x="14" y="514" width="1" height="1" fill="#000"/><rect x="14" y="523" width="1" height="1" fill="#000"/><rect x="14" y="533" width="1" height="1" fill="#000"/><text transform="translate(21,542) rotate(-90)" text-anchor="middle" x="0" y="0">3</text><rect x="14" y="552" width="1" height="1" fill="#000"/><rect x="14" y="562" width="1" height="1" fill="#000"/><rect x="14" y="571" width="1" height="1" fill="#000"/><rect x="14" y="581" width="1" height="1" fill="#000"/><rect x="13" y="590" width="3" height="1" fill="#000"/><rect x="14" y="600" width="1" height="1" fill="#000"/><rect x="14" y="610" width="1" height="1" fill="#000"/><rect x="14" y="619" width="1" height="1" fill="#000"/><rect x="14" y="629" width="1" height="1" fill="#000"/><text transform="translate(21,638) rotate(-90)" text-anchor="middle" x="0" y="0">4</text><rect x="14" y="648" width="1" height="1" fill="#000"/><rect x="14" y="658" width="1" height="1" fill="#000"/><rect x="14" y="667" width="1" height="1" fill="#000"/><rect x="14" y="677" width="1" height="1" fill="#000"/><rect x="13" y="686" width="3" height="1" fill="#000"/><rect x="14" y="696" width="1" height="1" fill="#000"/><rect x="14" y="706" width="1" height="1" fill="#000"/><rect x="14" y="715" width="1" height="1" fill="#000"/><rect x="14" y="725" width="1" height="1" fill="#000"/><text transform="translate(21,734) rotate(-90)" text-anchor="middle" x="0" y="0">5</text><rect x="14" y="744" width="1" height="1" fill="#000"/><rect x="14" y="754" width="1" height="1" fill="#000"/><rect x="14" y="763" width="1" height="1" fill="#000"/><rect x="14" y="773" width="1" height="1" fill="#000"/><rect x="13" y="782" width="3" height="1" fill="#000"/><rect x="14" y="792" width="1" height="1" fill="#000"/><rect x="14" y="802" width="1" height="1" fill="#000"/><rect x="14" y="811" width="1" height="1" fill="#000"/><rect x="14" y="821" width="1" height="1" fill="#000"/><text transform="translate(21,830) rotate(-90)" text-anchor="middle" x="0" y="0">6</text><rect x="14" y="840" width="1" height="1" fill="#000"/><rect x="14" y="850" width="1" height="1" fill="#000"/><rect x="14" y="859" width="1" height="1" fill="#000"/><rect x="14" y="869" width="1" height="1" fill="#000"/><rect x="13" y="878" width="3" height="1" fill="#000"/></svg>
<div style="left:28px;top:139px;width:1244px;height:741px;background:#ababab;border-left:1px solid #000;border-top:1px solid #000"></div>
<div style="left:1059px;top:179px;width:2px;height:701px;background:#000"></div>
<div style="left:241px;top:177px;width:818px;height:703px;background:#fff;border:1px solid #000;border-bottom:0"></div>
<div style="left:318px;top:254px;width:665px;height:626px;border:1px solid #c0c0c0;border-bottom:0"></div>
<div style="left:318px;top:255px;width:1px;height:16px;background:#000"></div>
<div style="left:1272px;top:113px;width:17px;height:767px;background:#efefef"></div>
<svg class="i" style="left:1278px;top:119px" width="7" height="4" viewBox="0 0 7 4"><polygon points="0,4 7,4 3.5,0" fill="#505050"/></svg>
<div style="left:1273px;top:131px;width:15px;height:443px;border:1px solid #929292;border-radius:2px;background:linear-gradient(90deg,#fbfbfb 0%,#ececec 46%,#d2d2d6 52%,#e9e9e9 100%)"></div>
<div style="left:1277px;top:348px;width:8px;height:1px;background:#606060"></div>
<div style="left:1277px;top:350px;width:8px;height:1px;background:#606060"></div>
<div style="left:1277px;top:352px;width:8px;height:1px;background:#606060"></div>
<div style="left:1277px;top:354px;width:8px;height:1px;background:#606060"></div>
<svg class="i" style="left:1278px;top:819px" width="7" height="4" viewBox="0 0 7 4"><polygon points="0,0 7,0 3.5,4" fill="#505050"/></svg>
<svg class="i" style="left:1273px;top:830px" width="16" height="16" viewBox="0 0 16 16"><rect x="0.5" y="0.5" width="14" height="14" rx="2" fill="#f2f2f2" stroke="#444"/><path d="M3.5 7.2 L7.5 3 L11.5 7.2 Z M3.5 12 L7.5 7.8 L11.5 12 Z" fill="#111"/></svg>
<svg class="i" style="left:1273px;top:847px" width="16" height="16" viewBox="0 0 16 16"><rect x="0.5" y="0.5" width="14" height="14" rx="2" fill="#f2f2f2" stroke="#444"/><circle cx="7.5" cy="7.5" r="3.6" fill="#5f88b8" stroke="#1c3458" stroke-width="1"/></svg>
<svg class="i" style="left:1273px;top:864px" width="16" height="16" viewBox="0 0 16 16"><rect x="0.5" y="0.5" width="14" height="14" rx="2" fill="#f2f2f2" stroke="#444"/><path d="M3.5 3 L7.5 7.2 L11.5 3 Z M3.5 7.8 L7.5 12 L11.5 7.8 Z" fill="#111"/></svg>
<div style="left:0px;top:880px;width:1272px;height:17px;background:#efefef"></div>
<svg class="i" style="left:8px;top:885px" width="4" height="7" viewBox="0 0 4 7"><polygon points="4,0 4,7 0,3.5" fill="#505050"/></svg>
<svg class="i" style="left:1262px;top:885px" width="4" height="7" viewBox="0 0 4 7"><polygon points="0,0 0,7 4,3.5" fill="#505050"/></svg>
<div style="left:0px;top:112px;width:1px;height:786px;background:#e4e4e8"></div>
<div style="left:1px;top:112px;width:1px;height:786px;background:#8c8c8c"></div>
<div style="left:20px;top:881px;width:1235px;height:15px;border:1px solid #929292;border-radius:2px;background:linear-gradient(#f8f8f8 0%,#ececec 46%,#d2d2d6 52%,#e4e4e4 100%)"></div>
<div style="left:632px;top:884px;width:1px;height:8px;background:#606060"></div>
<div style="left:634px;top:884px;width:1px;height:8px;background:#606060"></div>
<div style="left:636px;top:884px;width:1px;height:8px;background:#606060"></div>
<div style="left:1289px;top:113px;width:283px;height:785px;background:#efefef"></div>
<div style="left:1290px;top:113px;width:1px;height:785px;background:#fff"></div>
<div style="left:1291px;top:113px;width:5px;height:785px;background:#f5f5f5"></div>
<div style="left:1296px;top:113px;width:1px;height:785px;background:#b4b4b4"></div>
<div style="left:1297px;top:113px;width:1px;height:785px;background:#fff"></div>
<div style="left:1292px;top:495px;width:2px;height:2px;background:#9a9a9a"></div>
<div style="left:1292px;top:499px;width:2px;height:2px;background:#9a9a9a"></div>
<div style="left:1292px;top:503px;width:2px;height:2px;background:#9a9a9a"></div>
<div style="left:1292px;top:507px;width:2px;height:2px;background:#9a9a9a"></div>
<div style="left:1292px;top:511px;width:2px;height:2px;background:#9a9a9a"></div>
<svg class="i" style="left:1292px;top:486px" width="3" height="5" viewBox="0 0 3 5"><polygon points="0,0.5 2.6,2.5 0,4.5" fill="#606060"/></svg>
<svg class="i" style="left:1292px;top:517px" width="3" height="5" viewBox="0 0 3 5"><polygon points="0,0.5 2.6,2.5 0,4.5" fill="#606060"/></svg>
<div style="left:1291px;top:897px;width:281px;height:1px;background:#b4b4b4"></div>
<div style="left:1300px;top:115px;width:232px;height:780px;background:#efefef;border:1px solid #e0e0e0"></div>
<span class="t" style="left:1311px;top:123px;font-weight:bold;font-size:12px;letter-spacing:-0.1px">Properties</span>
<svg class="i" style="left:1517px;top:124px" width="10" height="10" viewBox="0 0 10 10"><path d="M1 1 L9 9 M9 1 L1 9" stroke="#484848" stroke-width="1.7"/></svg>
<div style="left:1301px;top:142px;width:230px;height:25px;background:linear-gradient(#dddddd 0%,#e6e6e6 35%,#efefef 100%)"></div>
<div style="left:1306px;top:151px;width:9px;height:9px;border:1px solid #6a7a9a;background:#fff"></div>
<div style="left:1308px;top:155px;width:5px;height:1px;background:#000"></div>
<span class="t" style="left:1320px;top:150px;font-weight:bold;font-size:12px;letter-spacing:0.3px">Text</span>
<div style="left:1515px;top:150px;width:11px;height:10px;border:1px solid #4a78b4;background:linear-gradient(#8db6e6 0,#8db6e6 2px,#fff 2px)"></div>
<div style="left:1518px;top:157px;width:1px;height:1px;background:#222"></div>
<div style="left:1520px;top:157px;width:1px;height:1px;background:#222"></div>
<div style="left:1522px;top:157px;width:1px;height:1px;background:#222"></div>
<div style="left:1301px;top:279px;width:230px;height:25px;background:linear-gradient(#dddddd 0%,#e6e6e6 35%,#efefef 100%)"></div>
<div style="left:1306px;top:288px;width:9px;height:9px;border:1px solid #6a7a9a;background:#fff"></div>
<div style="left:1308px;top:292px;width:5px;height:1px;background:#000"></div>
<span class="t" style="left:1320px;top:287px;font-weight:bold;font-size:12px;letter-spacing:-0.38px">Paragraph</span>
<div style="left:1515px;top:287px;width:11px;height:10px;border:1px solid #4a78b4;background:linear-gradient(#8db6e6 0,#8db6e6 2px,#fff 2px)"></div>
<div style="left:1518px;top:294px;width:1px;height:1px;background:#222"></div>
<div style="left:1520px;top:294px;width:1px;height:1px;background:#222"></div>
<div style="left:1522px;top:294px;width:1px;height:1px;background:#222"></div>
<div style="left:1301px;top:535px;width:230px;height:25px;background:linear-gradient(#dddddd 0%,#e6e6e6 35%,#efefef 100%)"></div>
<div style="left:1306px;top:544px;width:9px;height:9px;border:1px solid #6a7a9a;background:#fff"></div>
<div style="left:1308px;top:548px;width:5px;height:1px;background:#000"></div>
<div style="left:1310px;top:546px;width:1px;height:5px;background:#000"></div>
<span class="t" style="left:1320px;top:543px;font-weight:bold;font-size:12px;letter-spacing:-0.55px">Page</span>
<div style="left:1515px;top:543px;width:11px;height:10px;border:1px solid #4a78b4;background:linear-gradient(#8db6e6 0,#8db6e6 2px,#fff 2px)"></div>
<div style="left:1518px;top:550px;width:1px;height:1px;background:#222"></div>
<div style="left:1520px;top:550px;width:1px;height:1px;background:#222"></div>
<div style="left:1522px;top:550px;width:1px;height:1px;background:#222"></div>
<div style="left:1301px;top:560px;width:230px;height:1px;background:#dadada"></div>
<div class="combo" style="left:1307px;top:171px;width:158px;height:23px;border-color:#a4a4a4"></div>
<span class="t" style="left:1311px;top:176px;letter-spacing:-0.2px">Times New Roman</span>
<div class="cbtn" style="left:1447px;top:173px;width:17px;height:20px;"></div>
<svg class="i" style="left:1452px;top:181px" width="7" height="4" viewBox="0 0 7 4"><polygon points="0,0 7,0 3.5,4" fill="#000"/></svg>
<div class="combo" style="left:1471px;top:171px;width:51px;height:23px;border-color:#a4a4a4"></div>
<span class="t" style="left:1475px;top:176px;letter-spacing:-0.6px">12</span>
<div class="cbtn" style="left:1503px;top:173px;width:17px;height:20px;"></div>
<svg class="i" style="left:1508px;top:181px" width="7" height="4" viewBox="0 0 7 4"><polygon points="0,0 7,0 3.5,4" fill="#000"/></svg>
<div class="grp" style="left:1307px;top:203px;width:140px;height:31px;"></div>
<div class="grp" style="left:1471px;top:203px;width:54px;height:31px;"></div>
<svg class="i" style="left:1314px;top:210px" width="16" height="16" viewBox="0 0 16 16"><text x="8" y="13.6" font-family="Liberation Sans,sans-serif" font-size="17.5" font-weight="bold" fill="#1f2e42" text-anchor="middle" textLength="10" lengthAdjust="spacingAndGlyphs" stroke="#1f2e42" stroke-width="0.4">B</text></svg>
<svg class="i" style="left:1338px;top:210px" width="16" height="16" viewBox="0 0 16 16"><text x="8.4" y="13.7" font-family="Liberation Serif,serif" font-style="italic" font-weight="bold" font-size="18" fill="#1f2e42" text-anchor="middle" stroke="#1f2e42" stroke-width="0.3">I</text></svg>
<svg class="i" style="left:1362.5px;top:210px" width="16" height="16" viewBox="0 0 16 16"><text x="8" y="12.3" font-family="Liberation Sans,sans-serif" font-size="15.6" fill="#2a4468" text-anchor="middle" textLength="9.4" lengthAdjust="spacingAndGlyphs">U</text><rect x="2.5" y="14" width="11" height="1" fill="#2a4468"/></svg>
<svg class="i" style="left:1399px;top:210px" width="16" height="16" viewBox="0 0 16 16"><text x="8" y="11" font-family="Liberation Sans,sans-serif" font-size="7.4" fill="#1a1a1a" text-anchor="middle" textLength="14" lengthAdjust="spacingAndGlyphs">ABC</text><rect x="0" y="8" width="16" height="1" fill="#1a1a1a"/></svg>
<svg class="i" style="left:1424px;top:210px" width="16" height="16" viewBox="0 0 16 16"><text x="11.8" y="15.4" font-family="Liberation Sans,sans-serif" font-weight="bold" font-size="15.6" fill="#9aa0aa" text-anchor="middle" textLength="9" lengthAdjust="spacingAndGlyphs">A</text><text x="6" y="13.2" font-family="Liberation Sans,sans-serif" font-weight="bold" font-size="17" fill="#4a7cae" stroke="#2a5680" stroke-width="0.5" paint-order="stroke" text-anchor="middle" textLength="10.6" lengthAdjust="spacingAndGlyphs">A</text></svg>
<svg class="i" style="left:1477px;top:210px" width="16" height="16" viewBox="0 0 16 16"><rect x="1" y="1.5" width="3.4" height="14" fill="#e6e8ec" stroke="#7a8290" stroke-width="0.8"/><path d="M2.4 3.5 H4.4 M2.4 5.5 H4.4 M2.4 7.5 H4.4 M2.4 9.5 H4.4 M2.4 11.5 H4.4 M2.4 13.5 H4.4" stroke="#7a8290" stroke-width="0.6"/><text x="10.15" y="15.40" font-family="Liberation Sans,sans-serif" font-weight="bold" font-size="13.97" fill="#4a7cae" stroke="#16324e" stroke-width="0.8" paint-order="stroke" stroke-linejoin="round" text-anchor="middle">A</text><path d="M9.6 4.6 L12.6 1 L15.6 4.6 Z" fill="#f58a1e" stroke="#c0440c" stroke-width="0.8"/></svg>
<svg class="i" style="left:1502px;top:210px" width="16" height="16" viewBox="0 0 16 16"><rect x="1" y="1.5" width="3.4" height="14" fill="#e6e8ec" stroke="#7a8290" stroke-width="0.8"/><path d="M2.4 3.5 H4.4 M2.4 5.5 H4.4 M2.4 7.5 H4.4 M2.4 9.5 H4.4 M2.4 11.5 H4.4 M2.4 13.5 H4.4" stroke="#7a8290" stroke-width="0.6"/><text x="10.71" y="15.40" font-family="Liberation Sans,sans-serif" font-weight="bold" font-size="10.89" fill="#4a7cae" stroke="#16324e" stroke-width="0.8" paint-order="stroke" stroke-linejoin="round" text-anchor="middle">A</text><path d="M9.6 1.6 L12.6 5.2 L15.6 1.6 Z" fill="#f58a1e" stroke="#c0440c" stroke-width="0.8"/></svg>
<svg class="i" style="left:1386px;top:216px" width="5" height="3" viewBox="0 0 5 3"><polygon points="0,0 5,0 2.5,3" fill="#000"/></svg>
<div class="grp" style="left:1307px;top:244px;width:54px;height:31px;"></div>
<div class="grp" style="left:1369px;top:244px;width:40px;height:31px;"></div>
<div class="grp" style="left:1426px;top:244px;width:40px;height:31px;"></div>
<div class="grp" style="left:1471px;top:244px;width:40px;height:31px;"></div>
<svg class="i" style="left:1313px;top:251px" width="16" height="16" viewBox="0 0 16 16"><text x="5.22" y="14.50" font-family="Liberation Sans,sans-serif" font-weight="bold" font-size="15.36" fill="#8a9098" stroke="#7a8088" stroke-width="0.8" paint-order="stroke" stroke-linejoin="round" text-anchor="middle">A</text><text x="11.20" y="8.40" font-family="Liberation Sans,sans-serif" font-weight="bold" font-size="11.17" fill="#4a7cae" stroke="#16324e" stroke-width="0.8" paint-order="stroke" stroke-linejoin="round" text-anchor="middle">A</text><path d="M9 14.4 L11.6 11.4 L14.2 14.4 Z" fill="#f58a1e" stroke="#c0440c" stroke-width="0.8"/></svg>
<svg class="i" style="left:1338px;top:251px" width="16" height="16" viewBox="0 0 16 16"><text x="5.22" y="13.50" font-family="Liberation Sans,sans-serif" font-weight="bold" font-size="15.36" fill="#8a9098" stroke="#7a8088" stroke-width="0.8" paint-order="stroke" stroke-linejoin="round" text-anchor="middle">A</text><text x="11.60" y="14.60" font-family="Liberation Sans,sans-serif" font-weight="bold" font-size="11.17" fill="#4a7cae" stroke="#16324e" stroke-width="0.8" paint-order="stroke" stroke-linejoin="round" text-anchor="middle">A</text><path d="M9.4 1 L12 4 L14.6 1 Z" fill="#f58a1e" stroke="#c0440c" stroke-width="0.8"/></svg>
<svg class="i" style="left:1373.5px;top:251px" width="16" height="16" viewBox="0 0 16 16"><text x="0" y="7.4" font-family="Liberation Sans,sans-serif" font-size="8.6" font-weight="bold" fill="#3a4654">A</text><text x="9.6" y="7.4" font-family="Liberation Sans,sans-serif" font-size="8.6" font-weight="bold" fill="#3a4654">V</text><path d="M6.4 0 L9.8 8" stroke="#e0201a" stroke-width="1"/><path d="M0.8 12.4 L4.4 9.4 V11.2 H11.6 V9.4 L15.2 12.4 L11.6 15.4 V13.6 H4.4 V15.4 Z" fill="#6ab0ea" stroke="#1c5a9c" stroke-width="0.8"/></svg>
<svg class="i" style="left:1431px;top:251px" width="16" height="16" viewBox="0 0 16 16"><text x="7.77" y="10.00" font-family="Liberation Sans,sans-serif" font-weight="bold" font-size="12.85" fill="#4a7cae" stroke="#16324e" stroke-width="0.8" paint-order="stroke" stroke-linejoin="round" text-anchor="middle">A</text><rect x="0" y="12" width="16" height="3.6" fill="#e01414"/></svg>
<svg class="i" style="left:1476px;top:251px" width="16" height="16" viewBox="0 0 16 16"><rect x="0" y="0" width="10.5" height="8.8" fill="#f6dc3a"/><text x="0.4" y="7.4" font-family="Liberation Sans,sans-serif" font-size="9" fill="#1a1a1a" textLength="8.4" lengthAdjust="spacingAndGlyphs">ab</text><path d="M8.2 8.6 L13 2 L15.6 4 L10.8 10.4 L7.8 11 Z" fill="#f0f0f0" stroke="#5a5a5a" stroke-width="0.8"/><path d="M7.8 11 L8.2 8.8 L10.6 10.4 Z" fill="#e89a28" stroke="#7a4a08" stroke-width="0.5"/><rect x="0" y="12" width="16" height="3.6" fill="#e01414"/></svg>
<svg class="i" style="left:1398px;top:257px" width="5" height="3" viewBox="0 0 5 3"><polygon points="0,0 5,0 2.5,3" fill="#000"/></svg>
<svg class="i" style="left:1455px;top:257px" width="5" height="3" viewBox="0 0 5 3"><polygon points="0,0 5,0 2.5,3" fill="#000"/></svg>
<svg class="i" style="left:1500px;top:257px" width="5" height="3" viewBox="0 0 5 3"><polygon points="0,0 5,0 2.5,3" fill="#000"/></svg>
<div class="grp" style="left:1307px;top:305px;width:104px;height:31px;"></div>
<div style="left:1309px;top:308px;width:25px;height:25px;border:1px solid #6a6a6a;border-radius:3px;background:linear-gradient(#dcdcdc,#f0f0f0)"></div>
<svg class="i" style="left:1313px;top:312px" width="16" height="16" viewBox="0 0 16 16"><rect x="2" y="4" width="12" height="1" fill="#000"/><rect x="2" y="6" width="8" height="1" fill="#000"/><rect x="2" y="8" width="12" height="1" fill="#000"/><rect x="2" y="10" width="9" height="1" fill="#000"/><rect x="2" y="12" width="12" height="1" fill="#000"/></svg>
<svg class="i" style="left:1338px;top:312px" width="16" height="16" viewBox="0 0 16 16"><rect x="2.0" y="4" width="12" height="1" fill="#000"/><rect x="5.0" y="6" width="6" height="1" fill="#000"/><rect x="2.0" y="8" width="12" height="1" fill="#000"/><rect x="4.0" y="10" width="8" height="1" fill="#000"/><rect x="2.0" y="12" width="12" height="1" fill="#000"/></svg>
<svg class="i" style="left:1363px;top:312px" width="16" height="16" viewBox="0 0 16 16"><rect x="2" y="4" width="12" height="1" fill="#000"/><rect x="6" y="6" width="8" height="1" fill="#000"/><rect x="2" y="8" width="12" height="1" fill="#000"/><rect x="5" y="10" width="9" height="1" fill="#000"/><rect x="2" y="12" width="12" height="1" fill="#000"/></svg>
<svg class="i" style="left:1388px;top:312px" width="16" height="16" viewBox="0 0 16 16"><rect x="2" y="4" width="12" height="1" fill="#000"/><rect x="2" y="6" width="12" height="1" fill="#000"/><rect x="2" y="8" width="12" height="1" fill="#000"/><rect x="2" y="10" width="12" height="1" fill="#000"/><rect x="2" y="12" width="12" height="1" fill="#000"/></svg>
<div class="grp" style="left:1307px;top:341px;width:76px;height:31px;"></div>
<div class="grp" style="left:1402px;top:341px;width:54px;height:31px;"></div>
<svg class="i" style="left:1312px;top:348px" width="16" height="16" viewBox="0 0 16 16"><circle cx="3.2" cy="4.2" r="1.7" fill="#9fc4e4" stroke="#16263c" stroke-width="1"/><circle cx="3.2" cy="11.2" r="1.7" fill="#9fc4e4" stroke="#16263c" stroke-width="1"/><rect x="7" y="3" width="8" height="1" fill="#111"/><rect x="7" y="5" width="5" height="1" fill="#111"/><rect x="7" y="10" width="8" height="1" fill="#111"/><rect x="7" y="12" width="5" height="1" fill="#111"/></svg>
<svg class="i" style="left:1349px;top:348px" width="16" height="16" viewBox="0 0 16 16"><text x="3.6" y="6.6" font-family="Liberation Serif,serif" font-size="7.4" font-weight="bold" fill="#3f7ab0" text-anchor="middle">I</text><text x="3.6" y="13.6" font-family="Liberation Serif,serif" font-size="7.4" font-weight="bold" fill="#3f7ab0" text-anchor="middle">II</text><rect x="8" y="3" width="8" height="1" fill="#111"/><rect x="8" y="5" width="5" height="1" fill="#111"/><rect x="8" y="10" width="8" height="1" fill="#111"/><rect x="8" y="12" width="5" height="1" fill="#111"/></svg>
<svg class="i" style="left:1406px;top:348px" width="32" height="16" viewBox="0 0 32 16"><path d="M2.2 6 Q1 3 3.8 1.6" fill="none" stroke="#2a3a5a" stroke-width="0.9"/><path d="M4.6 1.4 L11 6 L5.6 14 L0.8 9 Z" fill="#88b4e4" stroke="#2c4c7c" stroke-width="0.9"/><path d="M4.6 1.4 L8.2 4 L3.2 11.4 L0.8 9 Z" fill="#c4dcf4"/><path d="M10 4.6 Q14.4 7 12.8 14" fill="none" stroke="#1a1a2a" stroke-width="1.7"/><rect x="16.5" y="0.5" width="14" height="15" fill="#fff" stroke="#6a7a9a" stroke-width="1"/><rect x="18.5" y="2.5" width="10" height="11" fill="#fff" stroke="#000" stroke-width="1"/></svg>
<svg class="i" style="left:1336px;top:354px" width="5" height="3" viewBox="0 0 5 3"><polygon points="0,0 5,0 2.5,3" fill="#000"/></svg>
<svg class="i" style="left:1372px;top:354px" width="5" height="3" viewBox="0 0 5 3"><polygon points="0,0 5,0 2.5,3" fill="#000"/></svg>
<svg class="i" style="left:1445px;top:354px" width="5" height="3" viewBox="0 0 5 3"><polygon points="0,0 5,0 2.5,3" fill="#000"/></svg>
<span class="t" style="left:1307px;top:375px;letter-spacing:-0.3px"><u>S</u>pacing:</span>
<span class="t" style="left:1422px;top:375px;"><u>I</u>ndent:</span>
<div class="grp" style="left:1307px;top:391px;width:54px;height:31px;"></div>
<div class="grp" style="left:1422px;top:391px;width:84px;height:31px;"></div>
<svg class="i" style="left:1313px;top:398px" width="16" height="16" viewBox="0 0 16 16"><path d="M0.6 6 L4 1.6 L7.4 6 Z" fill="#5aa6e6" stroke="#174c86" stroke-width="0.9"/><path d="M0.6 9.4 L4 13.8 L7.4 9.4 Z" fill="#5aa6e6" stroke="#174c86" stroke-width="0.9"/><rect x="9" y="1" width="7" height="1" fill="#222"/><rect x="9" y="3" width="7" height="1" fill="#222"/><rect x="9" y="5" width="7" height="1" fill="#222"/><rect x="9" y="10" width="7" height="1" fill="#222"/><rect x="9" y="12" width="7" height="1" fill="#222"/><rect x="9" y="14" width="7" height="1" fill="#222"/></svg>
<svg class="i" style="left:1338px;top:398px" width="16" height="16" viewBox="0 0 16 16"><path d="M0.6 2 L4 6.4 L7.4 2 Z" fill="#5aa6e6" stroke="#174c86" stroke-width="0.9"/><path d="M0.6 13.6 L4 9.2 L7.4 13.6 Z" fill="#5aa6e6" stroke="#174c86" stroke-width="0.9"/><rect x="9" y="2" width="7" height="1" fill="#222"/><rect x="9" y="4" width="7" height="1" fill="#222"/><rect x="9" y="6" width="7" height="1" fill="#222"/><rect x="9" y="8" width="7" height="1" fill="#222"/><rect x="9" y="10" width="7" height="1" fill="#222"/><rect x="9" y="12" width="7" height="1" fill="#222"/><rect x="9" y="14" width="7" height="1" fill="#222"/></svg>
<svg class="i" style="left:1428px;top:398px" width="16" height="16" viewBox="0 0 16 16"><rect x="6" y="2" width="10" height="1" fill="#111"/><rect x="8.5" y="0.6" width="1" height="3.6" fill="#111"/><rect x="6" y="13" width="10" height="1" fill="#111"/><rect x="8.5" y="11.8" width="1" height="3.6" fill="#111"/><rect x="9.5" y="5.6" width="6.5" height="1.6" fill="#2c8ad0"/><rect x="9.5" y="8.4" width="5" height="1.6" fill="#2c8ad0"/><rect x="9.5" y="10.8" width="6.5" height="0.9" fill="#7ab8e6"/><path d="M8.6 8.5 L4.8 5 V7.2 H0.8 V9.8 H4.8 V12 Z" fill="#f58a1e" stroke="#b23c0a" stroke-width="0.8"/></svg>
<svg class="i" style="left:1453px;top:398px" width="16" height="16" viewBox="0 0 16 16"><rect x="6" y="2" width="10" height="1" fill="#111"/><rect x="8.5" y="0.6" width="1" height="3.6" fill="#111"/><rect x="6" y="13" width="10" height="1" fill="#111"/><rect x="8.5" y="11.8" width="1" height="3.6" fill="#111"/><rect x="9.5" y="5.6" width="6.5" height="1.6" fill="#2c8ad0"/><rect x="9.5" y="8.4" width="5" height="1.6" fill="#2c8ad0"/><rect x="9.5" y="10.8" width="6.5" height="0.9" fill="#7ab8e6"/><path d="M0.6 8.5 L4.4 5 V7.2 H8.4 V9.8 H4.4 V12 Z" fill="#f58a1e" stroke="#b23c0a" stroke-width="0.8"/></svg>
<svg class="i" style="left:1477px;top:398px" width="22" height="16" viewBox="0 0 22 16"><path d="M8.4 5 L4.6 1 V3.4 H0.8 V6.6 H4.6 V9 Z" fill="#7cc83a" stroke="#2e7a12" stroke-width="0.8"/><path d="M9.5 2 V6 M9.5 4 H13 M12.5 2 V6" stroke="#3a4a6a" stroke-width="1" fill="none"/><rect x="13" y="2" width="8" height="1" fill="#2a3a5a"/><rect x="17" y="4" width="4" height="1" fill="#4a5a88"/><rect x="17" y="6" width="4" height="1" fill="#4a5a88"/><rect x="17" y="8" width="4" height="1" fill="#4a5a88"/><rect x="17" y="10" width="4" height="1" fill="#4a5a88"/><rect x="17" y="12" width="4" height="1" fill="#4a5a88"/><rect x="17" y="14" width="4" height="1" fill="#4a5a88"/></svg>
<div class="spin" style="left:1328px;top:433px;width:88px;height:23px;box-shadow:inset 0 0 0 1px #e9e9e9"></div>
<span class="t" style="left:1331px;top:438px;letter-spacing:-0.4px">0.00 "</span>
<div style="left:1399px;top:435px;width:15px;height:9px;border:1px solid #b4b4b4;background:#f2f2f6"></div>
<div style="left:1399px;top:445px;width:15px;height:9px;border:1px solid #b4b4b4;background:#f2f2f6"></div>
<svg class="i" style="left:1403px;top:438px" width="7" height="4" viewBox="0 0 7 4"><polygon points="0,4 7,4 3.5,0" fill="#5a6a9a"/></svg>
<svg class="i" style="left:1403px;top:448px" width="7" height="4" viewBox="0 0 7 4"><polygon points="0,0 7,0 3.5,4" fill="#5a6a9a"/></svg>
<div class="spin" style="left:1443px;top:433px;width:82px;height:23px;box-shadow:inset 0 0 0 1px #e9e9e9"></div>
<span class="t" style="left:1446px;top:438px;letter-spacing:-0.4px">0.00 "</span>
<div style="left:1508px;top:435px;width:15px;height:9px;border:1px solid #b4b4b4;background:#f2f2f6"></div>
<div style="left:1508px;top:445px;width:15px;height:9px;border:1px solid #b4b4b4;background:#f2f2f6"></div>
<svg class="i" style="left:1512px;top:438px" width="7" height="4" viewBox="0 0 7 4"><polygon points="0,4 7,4 3.5,0" fill="#5a6a9a"/></svg>
<svg class="i" style="left:1512px;top:448px" width="7" height="4" viewBox="0 0 7 4"><polygon points="0,0 7,0 3.5,4" fill="#5a6a9a"/></svg>
<div class="spin" style="left:1328px;top:464px;width:88px;height:23px;box-shadow:inset 0 0 0 1px #e9e9e9"></div>
<span class="t" style="left:1331px;top:469px;letter-spacing:-0.4px">0.00 "</span>
<div style="left:1399px;top:466px;width:15px;height:9px;border:1px solid #b4b4b4;background:#f2f2f6"></div>
<div style="left:1399px;top:476px;width:15px;height:9px;border:1px solid #b4b4b4;background:#f2f2f6"></div>
<svg class="i" style="left:1403px;top:469px" width="7" height="4" viewBox="0 0 7 4"><polygon points="0,4 7,4 3.5,0" fill="#5a6a9a"/></svg>
<svg class="i" style="left:1403px;top:479px" width="7" height="4" viewBox="0 0 7 4"><polygon points="0,0 7,0 3.5,4" fill="#5a6a9a"/></svg>
<div class="spin" style="left:1443px;top:464px;width:82px;height:23px;box-shadow:inset 0 0 0 1px #e9e9e9"></div>
<span class="t" style="left:1446px;top:469px;letter-spacing:-0.4px">0.00 "</span>
<div style="left:1508px;top:466px;width:15px;height:9px;border:1px solid #b4b4b4;background:#f2f2f6"></div>
<div style="left:1508px;top:476px;width:15px;height:9px;border:1px solid #b4b4b4;background:#f2f2f6"></div>
<svg class="i" style="left:1512px;top:469px" width="7" height="4" viewBox="0 0 7 4"><polygon points="0,4 7,4 3.5,0" fill="#5a6a9a"/></svg>
<svg class="i" style="left:1512px;top:479px" width="7" height="4" viewBox="0 0 7 4"><polygon points="0,0 7,0 3.5,4" fill="#5a6a9a"/></svg>
<div class="spin" style="left:1443px;top:496px;width:82px;height:23px;box-shadow:inset 0 0 0 1px #e9e9e9"></div>
<span class="t" style="left:1446px;top:501px;letter-spacing:-0.4px">0.00 "</span>
<div style="left:1508px;top:498px;width:15px;height:9px;border:1px solid #b4b4b4;background:#f2f2f6"></div>
<div style="left:1508px;top:508px;width:15px;height:9px;border:1px solid #b4b4b4;background:#f2f2f6"></div>
<svg class="i" style="left:1512px;top:501px" width="7" height="4" viewBox="0 0 7 4"><polygon points="0,4 7,4 3.5,0" fill="#5a6a9a"/></svg>
<svg class="i" style="left:1512px;top:511px" width="7" height="4" viewBox="0 0 7 4"><polygon points="0,0 7,0 3.5,4" fill="#5a6a9a"/></svg>
<svg class="i" style="left:1307px;top:438px" width="16" height="16" viewBox="0 0 16 16"><path d="M5.6 0.8 H8.8 M7.2 0.8 V5 M5.6 5 H8.8" stroke="#2a3a5a" stroke-width="0.9" fill="none"/><rect x="0.4" y="6.6" width="14" height="1.5" fill="#3f5486"/><rect x="0.4" y="9.6" width="14" height="1.5" fill="#3f5486"/><rect x="0.4" y="12.6" width="14" height="1.5" fill="#3f5486"/></svg>
<svg class="i" style="left:1307px;top:470px" width="16" height="16" viewBox="0 0 16 16"><rect x="0.4" y="1.6" width="14" height="1.5" fill="#3f5486"/><rect x="0.4" y="4.6" width="14" height="1.5" fill="#3f5486"/><rect x="0.4" y="7.6" width="14" height="1.5" fill="#3f5486"/><path d="M5.6 10.6 H8.8 M7.2 10.6 V15 M5.6 15 H8.8" stroke="#2a3a5a" stroke-width="0.9" fill="none"/></svg>
<svg class="i" style="left:1422px;top:438px" width="16" height="16" viewBox="0 0 16 16"><path d="M0.6 1.4 V4.6 M0.6 3 H5.4 M5.4 1.4 V4.6" stroke="#2a3a5a" stroke-width="0.9" fill="none"/><rect x="8" y="2.2" width="6.4" height="1.5" fill="#3f5486"/><rect x="8" y="5.2" width="6.4" height="1.5" fill="#3f5486"/><rect x="8" y="8.2" width="6.4" height="1.5" fill="#3f5486"/><rect x="8" y="11.2" width="6.4" height="1.5" fill="#3f5486"/><rect x="8" y="14" width="6.4" height="1.5" fill="#3f5486"/></svg>
<svg class="i" style="left:1422px;top:470px" width="16" height="16" viewBox="0 0 16 16"><path d="M9.4 1 V4.2 M9.4 2.6 H14.4 M14.4 1 V4.2" stroke="#2a3a5a" stroke-width="0.9" fill="none"/><rect x="0.4" y="2" width="6.4" height="1.5" fill="#3f5486"/><rect x="0.4" y="5" width="6.4" height="1.5" fill="#3f5486"/><rect x="0.4" y="8" width="6.4" height="1.5" fill="#3f5486"/><rect x="0.4" y="11" width="6.4" height="1.5" fill="#3f5486"/><rect x="0.4" y="13.8" width="6.4" height="1.5" fill="#3f5486"/></svg>
<svg class="i" style="left:1422px;top:501px" width="16" height="16" viewBox="0 0 16 16"><path d="M0.6 0.4 V3.6 M0.6 2 H4.6 M4.6 0.4 V3.6" stroke="#2a3a5a" stroke-width="0.9" fill="none"/><rect x="6.6" y="1.2" width="8" height="1.5" fill="#3f5486"/><rect x="0.4" y="4.6" width="14.2" height="1.5" fill="#3f5486"/><rect x="0.4" y="7.6" width="14.2" height="1.5" fill="#3f5486"/><rect x="0.4" y="10.6" width="14.2" height="1.5" fill="#3f5486"/><rect x="0.4" y="13.4" width="14.2" height="1.5" fill="#3f5486"/></svg>
<div class="grp" style="left:1307px;top:494px;width:42px;height:30px;"></div>
<svg class="i" style="left:1313px;top:501px" width="18" height="16" viewBox="0 0 18 16"><rect x="2.5" y="2.5" width="1.4" height="10" fill="#2a3a5a"/><path d="M0.4 5 L3.2 1.4 L6 5 Z M0.4 10 L3.2 13.6 L6 10 Z" fill="#2a3a5a"/><rect x="7.5" y="3" width="10" height="2" fill="#3f5486"/><rect x="7.5" y="7" width="10" height="2" fill="#3f5486"/><rect x="7.5" y="11" width="10" height="2" fill="#3f5486"/></svg>
<svg class="i" style="left:1337px;top:507px" width="5" height="3" viewBox="0 0 5 3"><polygon points="0,0 5,0 2.5,3" fill="#000"/></svg>
<div style="left:1532px;top:116px;width:1px;height:778px;background:#e2e2e2"></div>
<div style="left:1570px;top:113px;width:1px;height:785px;background:#9c9c9c"></div>
<div style="left:1571px;top:113px;width:1px;height:785px;background:#e6e6e6"></div>
<div style="left:1541px;top:150px;width:24px;height:1px;background:#d8d8d8"></div>
<svg class="i" style="left:1548px;top:127px" width="10" height="10" viewBox="0 0 10 10"><path d="M0 1.5 H7 M0 3.5 H7 M0 5.5 H7" stroke="#222" stroke-width="1"/><polygon points="3.5,6.5 9.5,6.5 6.5,9.5" fill="#000"/></svg>
<div style="left:1536px;top:154px;width:32px;height:32px;border:1px solid #b4b4b4;border-radius:4px;background:#f4f4f4"></div>
<svg class="i" style="left:1540px;top:157px" width="24" height="24" viewBox="0 0 24 24"><ellipse cx="12" cy="21.5" rx="10" ry="2" fill="#c8c8c8"/><path d="M2 6 L8 3 L14 5.5 L14 13 L8 19 L2 15.5 Z" fill="#2a9ae0"/><path d="M2 6 L8 3 L14 5.5 L8 8.6 Z" fill="#66c6f6"/><path d="M8 8.6 L14 5.5 V12 L8 15 Z" fill="#1c7ac4"/><path d="M2 10.6 L8 13.8 M5 4.6 L11 7.2 M5 7.4 V17" stroke="#bfe6fa" stroke-width="0.8" fill="none"/><path d="M8 15 L14 12 L14 5.8 L17 4.2 L22 6.6 V15.4 L14.6 20.4 L8 19 Z" fill="#7fcf3a"/><path d="M14 5.8 L17 4.2 L22 6.6 L18.4 8.6 Z" fill="#b4ec6c"/><path d="M8 15 L14 12 L18.4 14.4 L13 17.6 Z" fill="#b4ec6c"/><path d="M18.4 8.6 L22 6.6 V15.4 L18.4 17.8 Z" fill="#5aae22"/><path d="M13 17.6 L18.4 14.4 V17.8 L14.6 20.4 Z" fill="#5aae22"/><path d="M14 12 L18.4 14.4 V8.6 L14 5.8" stroke="#dff6b8" stroke-width="0.8" fill="none"/></svg>
<svg class="i" style="left:1540px;top:192px" width="24" height="24" viewBox="0 0 24 24"><ellipse cx="12" cy="22" rx="9" ry="1.6" fill="#cccccc"/><path d="M5 6 L18 12 L7 20 Z" fill="#1f6fc0"/><path d="M5 6 L18 12 L11 13 Z" fill="#12345c"/><path d="M11 13 Q17 11 19.6 15 Q20 19.6 15 20.4 Q12 17 11 13 Z" fill="#4aa63a"/><path d="M13 15 Q16 13.6 18 16 Q17 18 15 18.6 Z" fill="#9ad84a"/><circle cx="7.4" cy="4.6" r="3" fill="#c4702a"/><path d="M8 6 L12 10" stroke="#8a4a12" stroke-width="1.6"/><path d="M14.6 0.6 L15.6 2.8 L18 3 L16.2 4.6 L16.8 7 L14.6 5.8 L12.4 7 L13 4.6 L11.2 3 L13.6 2.8 Z" fill="#b45ad0"/><path d="M20.4 3.6 L21.4 5.8 L23.8 6 L22 7.6 L22.6 10 L20.4 8.8 L18.2 10 L18.8 7.6 L17 6 L19.4 5.8 Z" fill="#f2c83a"/><path d="M3.2 9 L4 10.8 L6 11 L4.5 12.3 L5 14.3 L3.2 13.3 L1.4 14.3 L1.9 12.3 L0.4 11 L2.4 10.8 Z" fill="#f05aa0"/><path d="M21.4 10.6 L22.2 12.3 L24 12.5 L22.6 13.7 L23 15.5 L21.4 14.6 L19.8 15.5 L20.2 13.7 L18.8 12.5 L20.6 12.3 Z" fill="#f06a7a"/></svg>
<svg class="i" style="left:1540px;top:227px" width="24" height="24" viewBox="0 0 24 24"><ellipse cx="13" cy="22.6" rx="9" ry="1.4" fill="#cccccc"/><path d="M2 8.6 L17.6 5 L21.6 17.6 L6 21.6 Z" fill="#f4f4f4" stroke="#b8b8b8" stroke-width="0.8"/><path d="M1.6 6 L17.6 1.6 L22 14.4 L6.4 19.2 Z" fill="#ffffff" stroke="#b4b4b4" stroke-width="0.8"/><path d="M3.6 7 L16.6 3.4 L20 13.4 L7.2 17.2 Z" fill="#9ed2f4"/><path d="M5.4 12.4 L9.6 7.6 L13.4 10 L12 15.8 L7.2 17.2 Z" fill="#2c5aa8"/><path d="M8 13 L10.4 10.8 L11.8 12.2 L11 15.4 L8.8 16 Z" fill="#e8eef6"/><path d="M12.4 14 Q16 11.6 19.4 11.6 L20 13.4 L12 15.8 Z" fill="#5ab43a"/></svg>
<svg class="i" style="left:1540px;top:262px" width="24" height="24" viewBox="0 0 24 24"><ellipse cx="12" cy="22.8" rx="8" ry="1.2" fill="#d0d0d0"/><circle cx="12" cy="12" r="10.4" fill="#f6a62a" stroke="#c87a0a" stroke-width="1"/><circle cx="12" cy="12" r="8" fill="#fcfcfc" stroke="#d48a1a" stroke-width="0.8"/><text x="12" y="7" font-family="Liberation Sans,sans-serif" font-size="6" font-weight="bold" fill="#333" text-anchor="middle">N</text><path d="M16.8 7.2 L13.2 13.2 L10.8 10.8 Z" fill="#3a6ad0"/><path d="M7.2 16.8 L10.8 10.8 L13.2 13.2 Z" fill="#e03a3a"/><path d="M7.6 8.4 L12.6 11.4 L11.4 12.6 Z M16.4 15.6 L11.4 12.6 L12.6 11.4 Z" fill="#a8b4c8"/></svg>
<div style="left:0px;top:897px;width:1572px;height:1px;background:#dedede"></div>
<div style="left:0px;top:898px;width:1572px;height:22px;background:#f0f0f0"></div>
<span class="t" style="left:10px;top:904px;letter-spacing:-0.4px">Page 1 / 1</span>
<span class="t" style="left:285px;top:904px;">Default</span>
<span class="t" style="left:649px;top:904px;letter-spacing:-0.37px">English (USA)</span>
<span class="t" style="left:837px;top:904px;letter-spacing:-0.8px">INSRT</span>
<span class="t" style="left:882px;top:904px;letter-spacing:-1px">STD</span>
<div style="left:279px;top:902px;width:1px;height:16px;background:#9a9a9a"></div>
<div style="left:539px;top:902px;width:1px;height:16px;background:#9a9a9a"></div>
<div style="left:832px;top:902px;width:1px;height:16px;background:#9a9a9a"></div>
<div style="left:877px;top:902px;width:1px;height:16px;background:#9a9a9a"></div>
<div style="left:911px;top:902px;width:1px;height:16px;background:#9a9a9a"></div>
<div style="left:927px;top:902px;width:1px;height:16px;background:#9a9a9a"></div>
<div style="left:956px;top:902px;width:1px;height:16px;background:#9a9a9a"></div>
<div style="left:1307px;top:902px;width:1px;height:16px;background:#9a9a9a"></div>
<div style="left:1383px;top:902px;width:1px;height:16px;background:#9a9a9a"></div>
<div style="left:1526px;top:902px;width:1px;height:16px;background:#9a9a9a"></div>
<svg class="i" style="left:1313px;top:902px" width="16" height="16" viewBox="0 0 16 16"><path d="M2.5 2.5 H8.5 L11.5 5.5 V12.5 H2.5 Z" fill="#fff" stroke="#7a7a7a"/><path d="M8.5 2.5 V5.5 H11.5" fill="none" stroke="#7a7a7a" stroke-width="0.8"/></svg>
<svg class="i" style="left:1330px;top:902px" width="20" height="16" viewBox="0 0 20 16"><defs><linearGradient id="v2g" x1="0" y1="0" x2="0" y2="1"><stop offset="0" stop-color="#ffffff"/><stop offset="1" stop-color="#b4cdf0"/></linearGradient></defs><path d="M0.5 2.5 H5.5 L8.5 5.5 V12.5 H0.5 Z" fill="url(#v2g)" stroke="#2a5590"/><path d="M5.5 2.5 V5.5 H8.5" fill="none" stroke="#2a5590" stroke-width="0.8"/><path d="M10.5 2.5 H15.5 L18.5 5.5 V12.5 H10.5 Z" fill="url(#v2g)" stroke="#2a5590"/><path d="M15.5 2.5 V5.5 H18.5" fill="none" stroke="#2a5590" stroke-width="0.8"/></svg>
<svg class="i" style="left:1355px;top:902px" width="18" height="16" viewBox="0 0 18 16"><path d="M0.5 5.5 L3 2.5 H8.5 V12.5 H0.5 Z" fill="#fff" stroke="#8a8a8a"/><path d="M8.5 2.5 H13.5 L16.5 5.5 V12.5 H8.5 Z" fill="#fff" stroke="#8a8a8a"/></svg>
<svg class="i" style="left:1388px;top:905px" width="12" height="12" viewBox="0 0 12 12"><circle cx="6" cy="6" r="5.2" fill="#eef2f8" stroke="#3c5a8c" stroke-width="1.1"/><rect x="3" y="5.4" width="6" height="1.3" fill="#2a4a7c"/></svg>
<svg class="i" style="left:1506px;top:905px" width="12" height="12" viewBox="0 0 12 12"><circle cx="6" cy="6" r="5.2" fill="#eef2f8" stroke="#3c5a8c" stroke-width="1.1"/><rect x="3" y="5.4" width="6" height="1.3" fill="#2a4a7c"/><rect x="5.35" y="3" width="1.3" height="6" fill="#2a4a7c"/></svg>
<div style="left:1405px;top:910px;width:97px;height:1px;background:#909090"></div>
<div style="left:1432px;top:905px;width:1px;height:11px;background:#909090"></div>
<div style="left:1449px;top:907px;width:8px;height:8px;border-radius:50%;background:radial-gradient(circle at 35% 35%,#9bb4d8,#3d5a8c);border:1px solid #2d3f60"></div>
<span class="t" style="left:1531px;top:904px;letter-spacing:-0.5px">100 %</span>
<div style="left:0px;top:920px;width:1572px;height:40px;background:linear-gradient(90deg,#7d91af 0%,#8296b4 3.4%,#a6bedc 4.2%,#a7bfdd 85.6%,#8b9fbd 87%,#8094b2 88.2%,#7b8eab 100%)"></div>
<div style="left:0px;top:920px;width:1572px;height:1px;background:#3d495b"></div>
<div style="left:0px;top:921px;width:1572px;height:1px;background:linear-gradient(90deg,#a8b8d0 0%,#a8b8d0 4%,#cfdcee 5%,#cfdcee 85%,#aebcd2 88%,#a8b6cc 100%)"></div>
<div style="left:60px;top:921px;width:54px;height:40px;border:1px solid #4a5c78;border-radius:3px;background:linear-gradient(100deg,#d6e2f2 0%,#bccee6 40%,#b0c4e0 100%);box-shadow:inset 0 0 0 1px rgba(255,255,255,.55)"></div>
<div style="left:114px;top:922px;width:4px;height:38px;border-right:1px solid #5a6e8c;border-top:1px solid #5a6e8c;border-radius:0 3px 0 0;background:#b6c8e2"></div>
<div style="left:246px;top:921px;width:58px;height:40px;border:1px solid #6a80a0;border-radius:3px;background:linear-gradient(100deg,#eef3fa 0%,#d4e0f0 45%,#c2d2e8 100%);box-shadow:inset 0 0 0 1px rgba(255,255,255,.6)"></div>
<svg class="i" style="left:8px;top:921px" width="40" height="39" viewBox="0 0 40 39"><defs><linearGradient id="sg1" x1="0" y1="0" x2="0" y2="1"><stop offset="0" stop-color="#b4c6da"/><stop offset="0.48" stop-color="#3f78ac"/><stop offset="0.5" stop-color="#0e4c8c"/><stop offset="0.8" stop-color="#0f62a8"/><stop offset="1" stop-color="#22c4f2"/></linearGradient></defs><circle cx="19" cy="19.3" r="18" fill="url(#sg1)" stroke="#1c3f66" stroke-width="1.2"/><path d="M6 29 A16 16 0 0 0 32 29 Q19 38 6 29 Z" fill="#2ad0f8" fill-opacity="0.55"/><path d="M11 10 Q15 7.6 20.4 9.6 L19 17.4 Q14.4 15.6 9.6 18 Z" fill="#ec5a24"/><path d="M21.4 10.2 Q25.6 12.6 31 10.4 L29.4 18.6 Q24.6 20.8 20 18.2 Z" fill="#86c440"/><path d="M9.2 19.6 Q13.8 17.4 18.6 19.2 L17.2 27 Q12.4 25.2 7.6 27.4 Z" fill="#3aa0e8"/><path d="M19.6 20 Q24 22.4 29 20.4 L27.6 28 Q22.8 30.4 18.2 27.8 Z" fill="#fbc82a"/><path d="M12 10.4 Q15 8.6 19.6 10 L19 13 Q15 11.6 11.4 13.4 Z" fill="#f8a060" fill-opacity="0.7"/></svg>
<svg class="i" style="left:70px;top:922px" width="34" height="36" viewBox="0 0 34 36"><path d="M17 5 Q6 5 5 17 Q5 29 17 30 Q25 30 28.4 23 H21.6 Q20 25.4 17 25.4 Q12 25.4 11.4 19.4 H29.4 Q30 5.6 17 5 Z M11.6 14.6 Q12.6 9.6 17 9.6 Q21.8 9.6 22.6 14.6 Z" fill="#2d8fdc" stroke="#1a6cb8" stroke-width="0.6" fill-rule="evenodd"/><path d="M13 7 Q19 5.4 24 8" stroke="#7cc6f4" stroke-width="1.4" fill="none"/><path d="M27 6.6 Q31.4 1 24.6 1.4 Q16 2.4 7.6 12 Q-0.6 22.6 1.6 29.6 Q4 34 11 29.4" fill="none" stroke="#f4c21c" stroke-width="2.4" stroke-linecap="round"/><path d="M27 6.6 Q29 3.4 25 3.2" fill="none" stroke="#fbe06a" stroke-width="1"/></svg>
<svg class="i" style="left:134px;top:925px" width="34" height="32" viewBox="0 0 34 32"><path d="M2 6 H12 L14 3.4 H24 V26 H2 Z" fill="#f0d070" stroke="#c8a23a" stroke-width="0.8"/><path d="M6 9 H18 L20 6.6 H31 V28 H6 Z" fill="#f6dc86" stroke="#c8a23a" stroke-width="0.8"/><rect x="3.6" y="2.4" width="3.6" height="2.6" fill="#3aa83a"/><rect x="13" y="4" width="3.6" height="2.6" fill="#d83a2a"/><rect x="21" y="7.2" width="3.6" height="2.6" fill="#2a78d0"/><path d="M7 11 H31 V28 H7 Z" fill="#fae8a4" fill-opacity="0.9"/><path d="M5 17.6 H28 Q29.6 17.6 29.6 19.2 V30 H24 V23.4 H10.6 V30 H5 Z" fill="#7cc0ee" stroke="#3c84c0" stroke-width="0.9"/><path d="M6 18.6 H28.6 V21 H6 Z" fill="#d0ecfc" fill-opacity="0.8"/></svg>
<svg class="i" style="left:198px;top:927px" width="30" height="28" viewBox="0 0 30 28"><path d="M6 2 H26 V24 H6 Z" fill="#a8c8e8" fill-opacity="0.75" stroke="#7aa4d0" stroke-width="0.8"/><path d="M3 3 H23 V25 H3 Z" fill="#c4dcf2" fill-opacity="0.9" stroke="#86aed6" stroke-width="0.8"/><circle cx="11.6" cy="13" r="9.4" fill="#f08a1e" stroke="#c8640a" stroke-width="0.8"/><circle cx="11.6" cy="13" r="7" fill="#f4a03a"/><path d="M8.6 7.6 L17.6 13 L8.6 18.4 Z" fill="#fff"/></svg>
<svg class="i" style="left:258px;top:923px" width="34" height="34" viewBox="0 0 34 34"><circle cx="17" cy="17" r="15.4" fill="#1873c2"/><path d="M12.6 10.4 Q16.4 7.6 20.8 10.2 Q25 6.4 31 8.6 Q25.6 8.6 21.6 13.4 Q17.6 10 12.6 10.4 Z" fill="#fff"/><path d="M3.4 19.2 Q11 15 17.6 20 Q24 13.4 32.2 15.6 Q24.6 16.6 19 25 Q12 18.6 3.4 19.2 Z" fill="#fff"/></svg>
<svg class="i" style="left:1393px;top:937px" width="10" height="6" viewBox="0 0 10 6"><polygon points="0,6 10,6 5,0" fill="#fff" stroke="#5a6a80" stroke-width="0.5"/></svg>
<svg class="i" style="left:1414px;top:933px" width="18" height="16" viewBox="0 0 18 16"><path d="M1 5.6 H4 L8 1.6 V14.4 L4 10.4 H1 Z" fill="#fff" stroke="#5a6a84" stroke-width="0.6"/><path d="M10 5 Q11.8 8 10 11 M12 3.4 Q14.8 8 12 12.6 M14 2 Q17.4 8 14 14" stroke="#fff" stroke-width="1.2" fill="none"/></svg>
<svg class="i" style="left:1438px;top:933px" width="16" height="16" viewBox="0 0 16 16"><rect x="1.4" y="1" width="1.6" height="14.4" fill="#fff" stroke="#5a6a84" stroke-width="0.4"/><path d="M3 2 Q6.4 0.4 9.4 2 Q12 3.4 15 2 V9.4 Q12 10.8 9.4 9.4 Q6.4 7.8 3 9.4 Z" fill="#fff" stroke="#5a6a84" stroke-width="0.5"/><circle cx="11.4" cy="12" r="4.4" fill="#e0262a" stroke="#fff" stroke-width="0.7"/><path d="M9.4 10 L13.4 14 M13.4 10 L9.4 14" stroke="#fff" stroke-width="1.5"/></svg>
<svg class="i" style="left:1463px;top:933px" width="16" height="16" viewBox="0 0 16 16"><rect x="5" y="3.6" width="10.4" height="8" fill="#5a6a84" stroke="#fff" stroke-width="1.2"/><rect x="8.6" y="12" width="3.2" height="1.6" fill="#fff"/><rect x="6" y="13.6" width="8.4" height="1.4" fill="#fff"/><path d="M1.4 1 V4 M4.6 1 V4 M0.6 4 H5.4 V7 H0.6 Z M3 7 V11 H5" stroke="#fff" stroke-width="1.1" fill="#8a9ab4"/></svg>
<span class="t" style="left:1500px;top:926px;color:#fff;font-size:12px;letter-spacing:-0.25px">1:55 AM</span>
<span class="t" style="left:1496px;top:943px;color:#fff;font-size:12px;letter-spacing:-0.2px">1/11/2017</span>
<div style="left:1558px;top:921px;width:14px;height:39px;border:1px solid #55647c;border-right:0;border-radius:2px 0 0 2px;background:linear-gradient(135deg,#5e6c84 0%,#7a8aa4 50%,#93a2ba 100%);box-shadow:inset 1px 1px 0 rgba(255,255,255,.35)"></div>
</body></html>
